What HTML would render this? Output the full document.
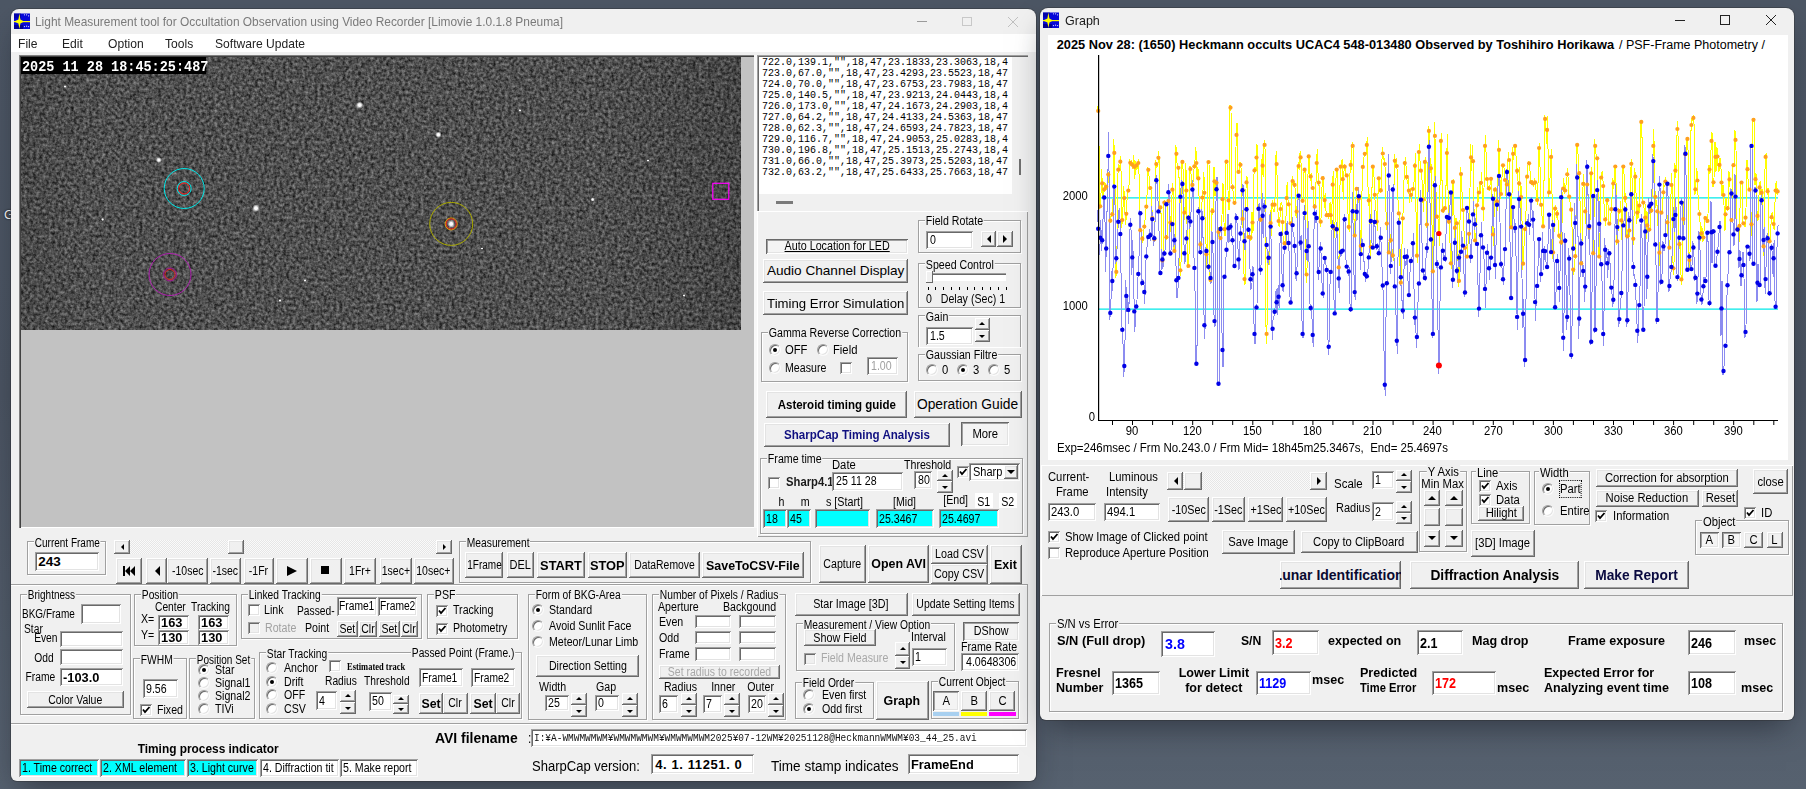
<!DOCTYPE html><html><head><meta charset="utf-8"><title>Limovie</title><style>
*{box-sizing:border-box}
html,body{margin:0;padding:0}
body{width:1806px;height:789px;overflow:hidden;position:relative;font-family:"Liberation Sans",sans-serif;font-size:12px;color:#000;
background:linear-gradient(180deg,#4d5765 0%,#4b5462 50%,#56616f 100%)}
.a{position:absolute}
.win{position:absolute;background:#f0f0f0;border-radius:8px;overflow:hidden;box-shadow:0 0 0 1px rgba(40,40,40,.35),0 14px 30px -8px rgba(20,24,32,.55)}
.btn{position:absolute;background:#f0f0f0;white-space:pre;box-shadow:inset -1px -1px #696969,inset 1px 1px #fff,inset -2px -2px #a0a0a0,inset 2px 2px #e3e3e3;display:flex;align-items:center;justify-content:center;white-space:nowrap;overflow:hidden;font-size:12.5px}
.prs{box-shadow:inset 1px 1px #696969,inset -1px -1px #fff,inset 2px 2px #a0a0a0,inset -2px -2px #e3e3e3;background:#f4f4f4}
.ed{position:absolute;background:#fff;box-shadow:inset 1px 1px #a0a0a0,inset -1px -1px #fff,inset 2px 2px #696969,inset -2px -2px #e3e3e3;white-space:nowrap;overflow:hidden;padding-left:4px;display:flex;align-items:center;font-size:12.5px}
.grp{position:absolute;border:1px solid #a0a0a0;box-shadow:inset 1px 1px #fff,1px 1px #fff}
.gl{position:absolute;top:-6.5px;left:6px;background:#f0f0f0;padding:0 1px;line-height:14px;white-space:nowrap;font-size:12.5px}
.t{position:absolute;white-space:pre;line-height:14px;font-size:12.5px}
.cb{position:absolute;width:12px;height:12px;background:#fff;box-shadow:inset 1px 1px #a0a0a0,inset -1px -1px #fff,inset 2px 2px #696969,inset -2px -2px #e3e3e3}
.rb{position:absolute;width:12px;height:12px;border-radius:50%;background:#fff;border:1px solid;border-color:#a0a0a0 #fafafa #fafafa #a0a0a0;transform:rotate(0deg);box-shadow:inset 1px 1px #696969,inset -1px -1px #e3e3e3}
.rb.on::after{content:"";position:absolute;left:3px;top:3px;width:4px;height:4px;border-radius:50%;background:#000}
.sp{position:absolute}
.sp i{position:absolute;left:0;width:100%;background:#f0f0f0;box-shadow:inset -1px -1px #696969,inset 1px 1px #fff,inset -2px -2px #a0a0a0}
.up::after,.dn::after{content:"";position:absolute;left:50%;top:50%;margin-left:-3px;border-left:3px solid transparent;border-right:3px solid transparent}
.up::after{margin-top:-2px;border-bottom:3px solid #000}
.dn::after{margin-top:-1px;border-top:3px solid #000}
.b{font-weight:bold}
.cy{background:#00ffff}
</style></head><body><div class="t" style="left:4px;top:207px;line-height:16px;font-size:13px;color:#fff;text-shadow:0 0 2px #000">G</div>
<div class="win" style="left:11px;top:8.5px;width:1025px;height:772.5px;border-radius:8px 8px 6px 6px"></div>
<div class="a" style="left:11px;top:34px;width:1025px;height:18px;background:#fff"></div>
<svg width="16" height="16" viewBox="0 0 16 16" style="position:absolute;left:14px;top:13px">
<rect x="0" y="0.5" width="16" height="15.5" fill="#0808d8"/>
<rect x="0" y="0.5" width="7" height="5" fill="#000090" opacity="0.6"/>
<rect x="0" y="12" width="9" height="4" fill="#000070" opacity="0.7"/>
<rect x="0" y="8" width="16" height="1.2" fill="#ffff00"/>
<path d="M5.4 0.5 L6.4 6.6 L10 8.6 L6.4 10.6 L5.4 16 L4.4 10.6 L0 8.6 L4.4 6.6 Z" fill="#ffff00"/>
<g fill="#e0e0ff"><circle cx="10.5" cy="1.8" r="0.6"/><circle cx="12.6" cy="1.8" r="0.6"/><circle cx="14.6" cy="2.8" r="0.6"/>
<circle cx="10.5" cy="13.6" r="0.6"/><circle cx="12.6" cy="13.2" r="0.6"/><circle cx="14.6" cy="13.6" r="0.6"/></g>
</svg>
<div class="t" style="left:35px;top:13.5px;line-height:16px;"><span style="display:inline-block;font-size:13.2px;transform:scaleX(0.903);transform-origin:0 50%;color:#7a7a7a;">Light Measurement tool for Occultation Observation using Video Recorder [Limovie 1.0.1.8 Pneuma]</span></div>
<div class="a" style="left:917px;top:21px;width:10px;height:1px;background:#9a9a9a"></div>
<div class="a" style="left:962px;top:16.5px;width:10px;height:9.5px;border:1px solid #c8c8c8"></div>
<svg class="a" style="left:1007px;top:16px" width="12" height="12"><path d="M1 1L11 11M11 1L1 11" stroke="#c0c0c0" stroke-width="1"/></svg>
<div class="t" style="left:18px;top:35.5px;line-height:16px;"><span style="display:inline-block;font-size:13px;transform:scaleX(0.93);transform-origin:0 50%;color:#222;">File</span></div>
<div class="t" style="left:62px;top:35.5px;line-height:16px;"><span style="display:inline-block;font-size:13px;transform:scaleX(0.93);transform-origin:0 50%;color:#222;">Edit</span></div>
<div class="t" style="left:108px;top:35.5px;line-height:16px;"><span style="display:inline-block;font-size:13px;transform:scaleX(0.93);transform-origin:0 50%;color:#222;">Option</span></div>
<div class="t" style="left:165px;top:35.5px;line-height:16px;"><span style="display:inline-block;font-size:13px;transform:scaleX(0.93);transform-origin:0 50%;color:#222;">Tools</span></div>
<div class="t" style="left:215px;top:35.5px;line-height:16px;"><span style="display:inline-block;font-size:13px;transform:scaleX(0.93);transform-origin:0 50%;color:#222;">Software Update</span></div>
<div class="a" style="left:19px;top:55px;width:736px;height:473px;background:#c2c2c2;box-shadow:inset 1px 1px #808080,inset 2px 2px #404040,inset -1px -1px #fff"></div>
<div class="a" style="left:754px;top:55px;width:3px;height:473px;background:#f8f8f8"></div>
<svg class="a" style="left:21px;top:56.5px" width="720" height="273" viewBox="0 0 720 273">
<defs>
<filter id="nz" x="0" y="0" width="100%" height="100%" filterUnits="userSpaceOnUse" color-interpolation-filters="sRGB">
<feTurbulence type="fractalNoise" baseFrequency="0.32" numOctaves="3" seed="3" result="n"/>
<feColorMatrix in="n" type="matrix" values="0.6 0 0 0 0.01  0.6 0 0 0 0.01  0.6 0 0 0 0.01  0 0 0 0 1"/>
</filter>
<linearGradient id="vg" x1="0" x2="1" y1="0" y2="0"><stop offset="0" stop-color="#000" stop-opacity="0.08"/><stop offset="0.1" stop-color="#000" stop-opacity="0"/><stop offset="0.8" stop-color="#000" stop-opacity="0"/><stop offset="1" stop-color="#000" stop-opacity="0.12"/></linearGradient>
<radialGradient id="st"><stop offset="0" stop-color="#fff"/><stop offset="0.4" stop-color="#fff" stop-opacity="0.95"/><stop offset="1" stop-color="#fff" stop-opacity="0"/></radialGradient>
</defs>
<rect width="720" height="273" filter="url(#nz)"/>
<rect width="720" height="273" fill="url(#vg)"/>

<circle cx="338.6" cy="48.1" r="3.6" fill="url(#st)"/>
<circle cx="417.4" cy="77.7" r="3.2" fill="url(#st)"/>
<circle cx="235" cy="151.2" r="3.8" fill="url(#st)"/>
<circle cx="137.9" cy="103.0" r="3" fill="url(#st)"/>
<circle cx="430.2" cy="166.9" r="3.8" fill="url(#st)"/>
<circle cx="571.6" cy="142.5" r="2" fill="url(#st)"/>
<circle cx="81.6" cy="162.5" r="1.6" fill="url(#st)"/>
<circle cx="284" cy="223.5" r="1.4" fill="url(#st)"/>
<circle cx="663" cy="238.5" r="1.4" fill="url(#st)"/>
<circle cx="499" cy="53.5" r="1.4" fill="url(#st)"/>
<circle cx="44" cy="29.5" r="1.4" fill="url(#st)"/>
<circle cx="259" cy="243.5" r="1.5" fill="url(#st)"/>
<circle cx="461" cy="191.5" r="1.3" fill="url(#st)"/>
<circle cx="627" cy="103.5" r="1.3" fill="url(#st)"/>
<circle cx="163.2" cy="131.5" r="20" fill="none" stroke="#00e8e8" stroke-width="1"/>
<circle cx="163.2" cy="131.5" r="7" fill="none" stroke="#00e8e8" stroke-width="1"/>
<circle cx="163.2" cy="131.5" r="5.5" fill="none" stroke="#ff2020" stroke-width="1"/>
<circle cx="149" cy="217.5" r="21" fill="none" stroke="#b020b0" stroke-width="1"/>
<circle cx="149" cy="217.5" r="6.5" fill="none" stroke="#a01090" stroke-width="1"/>
<circle cx="149" cy="217.5" r="5" fill="none" stroke="#e02020" stroke-width="1"/>
<circle cx="430.2" cy="166.9" r="21.5" fill="none" stroke="#a8a800" stroke-width="1"/>
<circle cx="430.2" cy="166.9" r="6" fill="none" stroke="#e0a000" stroke-width="1"/>
<circle cx="430.2" cy="166.9" r="5" fill="none" stroke="#e02020" stroke-width="1"/>
<rect x="691.8" y="126.30000000000001" width="16" height="16" fill="none" stroke="#ff00ff" stroke-width="1.2"/>
</svg>
<div class="a" style="left:21px;top:56.5px;width:185px;height:17.0px;background:#000"></div>
<div class="t" style="left:22px;top:58.5px;line-height:17px;font-family:'Liberation Mono',monospace;font-weight:bold;font-size:15px;color:#fff"><span style="display:inline-block;transform:scale(0.9,1.0);transform-origin:0 50%">2025 11 28 18:45:25:487</span></div>
<div class="a" style="left:757px;top:55px;width:271px;height:156px;background:#f0f0f0;box-shadow:inset 1px 1px #a0a0a0,inset 2px 2px #696969"></div>
<div class="a" style="left:759px;top:57px;width:253px;height:136.5px;background:#fff"></div>
<div class="a" style="left:1019px;top:159px;width:2px;height:16px;background:#707070"></div>
<div class="a" style="left:776px;top:201px;width:17px;height:2.5px;background:#7a7a7a"></div>
<div class="t" style="left:762px;top:57.2px;line-height:12px;font-family:'Liberation Mono',monospace;font-size:10px;letter-spacing:0px">722.0,139.1,&quot;&quot;,18,47,23.1833,23.3063,18,4</div>
<div class="t" style="left:762px;top:68.2px;line-height:12px;font-family:'Liberation Mono',monospace;font-size:10px;letter-spacing:0px">723.0,67.0,&quot;&quot;,18,47,23.4293,23.5523,18,47</div>
<div class="t" style="left:762px;top:79.2px;line-height:12px;font-family:'Liberation Mono',monospace;font-size:10px;letter-spacing:0px">724.0,70.0,&quot;&quot;,18,47,23.6753,23.7983,18,47</div>
<div class="t" style="left:762px;top:90.2px;line-height:12px;font-family:'Liberation Mono',monospace;font-size:10px;letter-spacing:0px">725.0,140.5,&quot;&quot;,18,47,23.9213,24.0443,18,4</div>
<div class="t" style="left:762px;top:101.2px;line-height:12px;font-family:'Liberation Mono',monospace;font-size:10px;letter-spacing:0px">726.0,173.0,&quot;&quot;,18,47,24.1673,24.2903,18,4</div>
<div class="t" style="left:762px;top:112.2px;line-height:12px;font-family:'Liberation Mono',monospace;font-size:10px;letter-spacing:0px">727.0,64.2,&quot;&quot;,18,47,24.4133,24.5363,18,47</div>
<div class="t" style="left:762px;top:123.2px;line-height:12px;font-family:'Liberation Mono',monospace;font-size:10px;letter-spacing:0px">728.0,62.3,&quot;&quot;,18,47,24.6593,24.7823,18,47</div>
<div class="t" style="left:762px;top:134.2px;line-height:12px;font-family:'Liberation Mono',monospace;font-size:10px;letter-spacing:0px">729.0,116.7,&quot;&quot;,18,47,24.9053,25.0283,18,4</div>
<div class="t" style="left:762px;top:145.2px;line-height:12px;font-family:'Liberation Mono',monospace;font-size:10px;letter-spacing:0px">730.0,196.8,&quot;&quot;,18,47,25.1513,25.2743,18,4</div>
<div class="t" style="left:762px;top:156.2px;line-height:12px;font-family:'Liberation Mono',monospace;font-size:10px;letter-spacing:0px">731.0,66.0,&quot;&quot;,18,47,25.3973,25.5203,18,47</div>
<div class="t" style="left:762px;top:167.2px;line-height:12px;font-family:'Liberation Mono',monospace;font-size:10px;letter-spacing:0px">732.0,63.2,&quot;&quot;,18,47,25.6433,25.7663,18,47</div>
<div class="a" style="left:757px;top:211px;width:271px;height:326px;box-shadow:inset 1px 1px #fff,inset -1px -1px #a0a0a0"></div>
<div class="btn prs" style="left:765.5px;top:238.6px;width:142.5px;height:15.4px;text-decoration:underline"><span style="display:inline-block;font-size:12.5px;transform:scaleX(0.86);transform-origin:50% 50%;">Auto Location for LED</span></div>
<div class="btn" style="left:763.3px;top:259px;width:144.7px;height:23.5px;"><span style="display:inline-block;font-size:13.6px;transform:scaleX(1.0);transform-origin:50% 50%;">Audio Channel Display</span></div>
<div class="btn" style="left:763.3px;top:291px;width:144.7px;height:24px;"><span style="display:inline-block;font-size:13.6px;transform:scaleX(0.97);transform-origin:50% 50%;">Timing Error Simulation</span></div>
<div class="grp" style="left:917.5px;top:219.6px;width:103.3px;height:33.7px;"><div class="gl" style="left:6px;font-size:12.5px;transform:scaleX(0.85);transform-origin:0 50%">Field Rotate</div></div>
<div class="ed" style="left:925.5px;top:231px;width:47.5px;height:18.2px;padding-left:4px;"><span style="display:inline-block;font-size:12.5px;transform:scaleX(0.85);transform-origin:0 50%;">0</span></div>
<div class="btn" style="left:981.4px;top:230.5px;width:15.1px;height:16.0px;"></div>
<div class="a" style="width:0;height:0;border-top:4px solid transparent;border-bottom:4px solid transparent;border-right:4px solid #000;left:987.0px;top:234.5px"></div>
<div class="btn" style="left:996.5px;top:230.5px;width:16.8px;height:16.0px;"></div>
<div class="a" style="width:0;height:0;border-top:4px solid transparent;border-bottom:4px solid transparent;border-left:4px solid #000;left:1003.0px;top:234.5px"></div>
<div class="grp" style="left:917.5px;top:263px;width:103.3px;height:45px;"><div class="gl" style="left:6px;font-size:12.5px;transform:scaleX(0.85);transform-origin:0 50%">Speed Control</div></div>
<div class="a" style="left:926.7px;top:273.4px;width:79.8px;height:7.3px;background:#fff;box-shadow:inset 1px 1px #a0a0a0,inset 2px 2px #696969"></div>
<div class="a" style="left:926px;top:271px;width:7px;height:12px;background:#f0f0f0;box-shadow:inset -1px -1px #696969,inset 1px 1px #fff"></div>
<div class="a" style="left:927.5px;top:287px;width:1.0px;height:3px;background:#000"></div>
<div class="a" style="left:935.3px;top:287px;width:1.0px;height:3px;background:#000"></div>
<div class="a" style="left:943.1px;top:287px;width:1.0px;height:3px;background:#000"></div>
<div class="a" style="left:950.9px;top:287px;width:1.0px;height:3px;background:#000"></div>
<div class="a" style="left:958.7px;top:287px;width:1.0px;height:3px;background:#000"></div>
<div class="a" style="left:966.5px;top:287px;width:1.0px;height:3px;background:#000"></div>
<div class="a" style="left:974.3px;top:287px;width:1.0px;height:3px;background:#000"></div>
<div class="a" style="left:982.1px;top:287px;width:1.0px;height:3px;background:#000"></div>
<div class="a" style="left:989.9px;top:287px;width:1.0px;height:3px;background:#000"></div>
<div class="a" style="left:997.7px;top:287px;width:1.0px;height:3px;background:#000"></div>
<div class="a" style="left:1005.5px;top:287px;width:1.0px;height:3px;background:#000"></div>
<div class="t" style="left:926px;top:290.5px;line-height:16px;"><span style="display:inline-block;font-size:12.5px;transform:scaleX(0.85);transform-origin:0 50%;">0   Delay (Sec) 1</span></div>
<div class="grp" style="left:917.5px;top:315.4px;width:103.3px;height:31.6px;border-bottom:none"><div class="gl" style="left:6px;font-size:12.5px;transform:scaleX(0.85);transform-origin:0 50%">Gain</div></div>
<div class="ed" style="left:925.5px;top:326.8px;width:47.5px;height:18.2px;padding-left:4px;"><span style="display:inline-block;font-size:12.5px;transform:scaleX(0.85);transform-origin:0 50%;">1.5</span></div>
<div class="sp" style="left:974.6px;top:318.3px;width:15.2px;height:24.0px"><i class="up" style="top:0;height:12.0px"></i><i class="dn" style="top:12.0px;height:12.0px"></i></div>
<div class="grp" style="left:917.5px;top:353.7px;width:103.3px;height:27.3px;"><div class="gl" style="left:6px;font-size:12.5px;transform:scaleX(0.85);transform-origin:0 50%">Gaussian Filtre</div></div>
<div class="rb" style="left:925.9px;top:363.6px"></div>
<div class="t" style="left:942px;top:361.6px;line-height:16px;"><span style="display:inline-block;font-size:12.5px;transform:scaleX(0.9);transform-origin:0 50%;">0</span></div>
<div class="rb on" style="left:957.2px;top:363.6px"></div>
<div class="t" style="left:973px;top:361.6px;line-height:16px;"><span style="display:inline-block;font-size:12.5px;transform:scaleX(0.9);transform-origin:0 50%;">3</span></div>
<div class="rb" style="left:987.9px;top:363.6px"></div>
<div class="t" style="left:1004px;top:361.6px;line-height:16px;"><span style="display:inline-block;font-size:12.5px;transform:scaleX(0.9);transform-origin:0 50%;">5</span></div>
<div class="grp" style="left:760.7px;top:331.9px;width:147.3px;height:50.6px;"><div class="gl" style="left:6px;font-size:12.5px;transform:scaleX(0.85);transform-origin:0 50%">Gamma Reverse Correction</div></div>
<div class="rb on" style="left:768.5px;top:343.6px"></div>
<div class="t" style="left:785px;top:341.6px;line-height:16px;"><span style="display:inline-block;font-size:12.5px;transform:scaleX(0.9);transform-origin:0 50%;">OFF</span></div>
<div class="rb" style="left:816.5px;top:343.6px"></div>
<div class="t" style="left:833px;top:341.6px;line-height:16px;"><span style="display:inline-block;font-size:12.5px;transform:scaleX(0.9);transform-origin:0 50%;">Field</span></div>
<div class="rb" style="left:768.5px;top:361.9px"></div>
<div class="t" style="left:785px;top:359.9px;line-height:16px;"><span style="display:inline-block;font-size:12.5px;transform:scaleX(0.85);transform-origin:0 50%;">Measure</span></div>
<div class="cb" style="left:840.2px;top:362px;width:12px;height:12px;"></div>
<div class="ed" style="left:866.5px;top:356.7px;width:31.4px;height:18.7px;padding-left:4px;"><span style="display:inline-block;font-size:12.5px;transform:scaleX(0.85);transform-origin:0 50%;color:#a0a0a0;">1.00</span></div>
<div class="btn" style="left:765.7px;top:390.5px;width:141.7px;height:27.0px;"><span style="display:inline-block;font-size:13px;transform:scaleX(0.885);transform-origin:50% 50%;font-weight:bold;">Asteroid timing guide</span></div>
<div class="btn" style="left:913.5px;top:390.5px;width:108.1px;height:27.0px;"><span style="display:inline-block;font-size:13.8px;transform:scaleX(1.0);transform-origin:50% 50%;">Operation Guide</span></div>
<div class="btn" style="left:763.5px;top:422.5px;width:186.5px;height:24.8px;"><span style="display:inline-block;font-size:13px;transform:scaleX(0.89);transform-origin:50% 50%;font-weight:bold;color:#101080;">SharpCap Timing Analysis</span></div>
<div class="btn prs" style="left:961.1px;top:422.2px;width:47.7px;height:23.7px;"><span style="display:inline-block;font-size:12.5px;transform:scaleX(0.9);transform-origin:50% 50%;">More</span></div>
<div class="grp" style="left:759.5px;top:457.7px;width:263.5px;height:76.7px;"><div class="gl" style="left:6px;font-size:12.5px;transform:scaleX(0.85);transform-origin:0 50%">Frame time</div></div>
<div class="cb" style="left:767.5px;top:476.5px;width:12px;height:12px;"></div>
<div class="t" style="left:786px;top:473.8px;line-height:16px;"><span style="display:inline-block;font-size:12.5px;transform:scaleX(0.9);transform-origin:0 50%;font-weight:bold;color:#1a1a1a;">Sharp4.1</span></div>
<div class="t" style="left:831.7px;top:456.7px;line-height:16px;"><span style="display:inline-block;font-size:12.5px;transform:scaleX(0.9);transform-origin:0 50%;">Date</span></div>
<div class="ed" style="left:831.7px;top:471.7px;width:71.0px;height:19.0px;padding-left:4px;"><span style="display:inline-block;font-size:12.5px;transform:scaleX(0.85);transform-origin:0 50%;">25 11 28</span></div>
<div class="t" style="left:904px;top:456.8px;line-height:16px;"><span style="display:inline-block;font-size:12.5px;transform:scaleX(0.85);transform-origin:0 50%;">Threshold</span></div>
<div class="ed" style="left:913.5px;top:471.3px;width:18.2px;height:18.2px;padding-left:4px;"><span style="display:inline-block;font-size:12.5px;transform:scaleX(0.85);transform-origin:0 50%;">80</span></div>
<div class="sp" style="left:937.2px;top:470.3px;width:15.4px;height:22.3px"><i class="up" style="top:0;height:11.2px"></i><i class="dn" style="top:11.2px;height:11.2px"></i></div>
<div class="cb" style="left:956.7px;top:466px;width:12px;height:12px;"><svg width="12" height="12" style="position:absolute;left:0;top:0"><path d="M3 5.5 L5 8 L9.5 3" stroke="#000" stroke-width="1.8" fill="none"/></svg></div>
<div class="ed" style="left:969.2px;top:462.8px;width:51px;height:18.5px"><span style="display:inline-block;font-size:12.5px;transform:scaleX(0.88);transform-origin:0 50%;">Sharp</span></div>
<div class="btn" style="left:1003.7px;top:464.8px;width:14.8px;height:14.2px;"></div>
<div class="a" style="width:0;height:0;border-left:4px solid transparent;border-right:4px solid transparent;border-top:4px solid #000;left:1007px;top:470.0px"></div>
<div class="t" style="left:781px;top:493.5px;line-height:16px;width:0;display:flex;justify-content:center;"><span style="display:inline-block;font-size:12.5px;transform:scaleX(0.85);transform-origin:50% 50%;">h</span></div>
<div class="t" style="left:805px;top:493.5px;line-height:16px;width:0;display:flex;justify-content:center;"><span style="display:inline-block;font-size:12.5px;transform:scaleX(0.85);transform-origin:50% 50%;">m</span></div>
<div class="t" style="left:825.8px;top:493.5px;line-height:16px;"><span style="display:inline-block;font-size:12.5px;transform:scaleX(0.86);transform-origin:0 50%;">s [Start]</span></div>
<div class="t" style="left:905px;top:493.5px;line-height:16px;width:0;display:flex;justify-content:center;"><span style="display:inline-block;font-size:12.5px;transform:scaleX(0.85);transform-origin:50% 50%;">[Mid]</span></div>
<div class="t" style="left:956px;top:491.7px;line-height:16px;width:0;display:flex;justify-content:center;"><span style="display:inline-block;font-size:12.5px;transform:scaleX(0.85);transform-origin:50% 50%;">[End]</span></div>
<div class="a" style="left:975px;top:492.6px;width:17.6px;height:15.2px;background:#fff"></div>
<div class="t" style="left:984px;top:493.5px;line-height:16px;width:0;display:flex;justify-content:center;"><span style="display:inline-block;font-size:12.5px;transform:scaleX(0.85);transform-origin:50% 50%;">S1</span></div>
<div class="a" style="left:998.7px;top:492.6px;width:18.2px;height:15.2px;background:#fff"></div>
<div class="t" style="left:1008px;top:493.5px;line-height:16px;width:0;display:flex;justify-content:center;"><span style="display:inline-block;font-size:12.5px;transform:scaleX(0.85);transform-origin:50% 50%;">S2</span></div>
<div class="ed" style="left:763.3px;top:509.1px;width:23.5px;height:19.0px;padding-left:3px;background:#00ffff;"><span style="display:inline-block;font-size:12.5px;transform:scaleX(0.85);transform-origin:0 50%;">18</span></div>
<div class="ed" style="left:787.4px;top:509.1px;width:23.2px;height:19.0px;padding-left:3px;background:#00ffff;"><span style="display:inline-block;font-size:12.5px;transform:scaleX(0.85);transform-origin:0 50%;">45</span></div>
<div class="ed" style="left:815.3px;top:509.1px;width:55.1px;height:19.0px;padding-left:4px;background:#00ffff;"></div>
<div class="ed" style="left:875.5px;top:509.1px;width:58.9px;height:19.0px;padding-left:3px;background:#00ffff;"><span style="display:inline-block;font-size:12.5px;transform:scaleX(0.85);transform-origin:0 50%;">25.3467</span></div>
<div class="ed" style="left:939.2px;top:509.1px;width:59.5px;height:19.0px;padding-left:3px;background:#00ffff;"><span style="display:inline-block;font-size:12.5px;transform:scaleX(0.85);transform-origin:0 50%;">25.4697</span></div>
<div class="grp" style="left:27.4px;top:541.4px;width:79.1px;height:33.6px;"><div class="gl" style="left:6px;font-size:12.5px;transform:scaleX(0.8);transform-origin:0 50%">Current Frame</div></div>
<div class="ed" style="left:35.3px;top:552.4px;width:63.6px;height:19.0px;padding-left:3px;"><span style="display:inline-block;font-size:13.5px;transform:scaleX(1.0);transform-origin:0 50%;font-weight:bold;">243</span></div>
<div class="a" style="left:114px;top:539.5px;width:338px;height:14.1px;background:#f2f2f2;background-image:repeating-conic-gradient(#e6e6e6 0 25%,#fafafa 0 50%);background-size:2px 2px"></div>
<div class="btn" style="left:114px;top:539.5px;width:16px;height:14.1px;"></div>
<div class="a" style="width:0;height:0;border-top:3px solid transparent;border-bottom:3px solid transparent;border-right:3px solid #000;left:120.5px;top:543.5px"></div>
<div class="btn" style="left:228px;top:539.5px;width:16px;height:14.1px;"></div>
<div class="btn" style="left:436px;top:539.5px;width:16px;height:14.1px;"></div>
<div class="a" style="width:0;height:0;border-top:3px solid transparent;border-bottom:3px solid transparent;border-left:3px solid #000;left:442.5px;top:543.5px"></div>
<div class="btn" style="left:115.9px;top:558.2px;width:25.8px;height:25.4px;"><svg width="14" height="12"><rect x="1" y="1" width="2" height="10"/><path d="M8 1L3 6L8 11Z M13 1L8 6L13 11Z"/></svg></div>
<div class="btn" style="left:146px;top:558.2px;width:21.3px;height:25.4px;"></div>
<div class="a" style="width:0;height:0;border-top:5px solid transparent;border-bottom:5px solid transparent;border-right:5px solid #000;left:154.5px;top:566px"></div>
<div class="btn" style="left:167.3px;top:558.2px;width:40.3px;height:25.4px;"><span style="display:inline-block;font-size:12.5px;transform:scaleX(0.84);transform-origin:50% 50%;">-10sec</span></div>
<div class="btn" style="left:209.9px;top:558.2px;width:31.6px;height:25.4px;"><span style="display:inline-block;font-size:12.5px;transform:scaleX(0.84);transform-origin:50% 50%;">-1sec</span></div>
<div class="btn" style="left:244px;top:558.2px;width:29.8px;height:25.4px;"><span style="display:inline-block;font-size:12.5px;transform:scaleX(0.84);transform-origin:50% 50%;">-1Fr</span></div>
<div class="btn" style="left:276px;top:558.2px;width:31.6px;height:25.4px;"><svg width="12" height="12"><path d="M1 1L11 6L1 11Z"/></svg></div>
<div class="btn" style="left:310px;top:558.2px;width:31.8px;height:25.4px;"><svg width="9" height="9"><rect x="0" y="0" width="8" height="8"/></svg></div>
<div class="btn" style="left:344px;top:558.2px;width:31.7px;height:25.4px;"><span style="display:inline-block;font-size:12.5px;transform:scaleX(0.84);transform-origin:50% 50%;">1Fr+</span></div>
<div class="btn" style="left:379.8px;top:558.2px;width:31.9px;height:25.4px;"><span style="display:inline-block;font-size:12.5px;transform:scaleX(0.84);transform-origin:50% 50%;">1sec+</span></div>
<div class="btn" style="left:414px;top:558.2px;width:39.6px;height:25.4px;"><span style="display:inline-block;font-size:12.5px;transform:scaleX(0.84);transform-origin:50% 50%;">10sec+</span></div>
<div class="grp" style="left:459px;top:541px;width:352px;height:42.3px;"><div class="gl" style="left:6px;font-size:12.5px;transform:scaleX(0.82);transform-origin:0 50%">Measurement</div></div>
<div class="btn" style="left:465.3px;top:552.4px;width:37.6px;height:26.1px;"><span style="display:inline-block;font-size:12.5px;transform:scaleX(0.8);transform-origin:50% 50%;">1Frame</span></div>
<div class="btn" style="left:507px;top:552.4px;width:26.8px;height:26.1px;"><span style="display:inline-block;font-size:12.5px;transform:scaleX(0.88);transform-origin:50% 50%;">DEL</span></div>
<div class="btn" style="left:537.3px;top:552.4px;width:47.4px;height:26.1px;"><span style="display:inline-block;font-size:13.5px;transform:scaleX(0.95);transform-origin:50% 50%;font-weight:bold;">START</span></div>
<div class="btn" style="left:587.5px;top:552.4px;width:39.3px;height:26.1px;"><span style="display:inline-block;font-size:13.5px;transform:scaleX(0.95);transform-origin:50% 50%;font-weight:bold;">STOP</span></div>
<div class="btn" style="left:629px;top:552.4px;width:71.3px;height:26.1px;"><span style="display:inline-block;font-size:12.5px;transform:scaleX(0.83);transform-origin:50% 50%;">DataRemove</span></div>
<div class="btn" style="left:701.9px;top:552.4px;width:101.9px;height:26.1px;"><span style="display:inline-block;font-size:13.5px;transform:scaleX(0.92);transform-origin:50% 50%;font-weight:bold;">SaveToCSV-File</span></div>
<div class="btn" style="left:819.3px;top:544.5px;width:46.4px;height:38.8px;"><span style="display:inline-block;font-size:12.5px;transform:scaleX(0.85);transform-origin:50% 50%;">Capture</span></div>
<div class="btn" style="left:867.6px;top:544.5px;width:61.8px;height:38.8px;"><span style="display:inline-block;font-size:13.5px;transform:scaleX(0.92);transform-origin:50% 50%;font-weight:bold;">Open AVI</span></div>
<div class="btn" style="left:931.4px;top:544.5px;width:56.3px;height:19.0px;"><span style="display:inline-block;font-size:12.5px;transform:scaleX(0.86);transform-origin:50% 50%;">Load CSV</span></div>
<div class="btn" style="left:931.4px;top:564.2px;width:56.3px;height:19.4px;"><span style="display:inline-block;font-size:12.5px;transform:scaleX(0.86);transform-origin:50% 50%;">Copy CSV</span></div>
<div class="btn" style="left:989.5px;top:544.5px;width:32.2px;height:39.1px;"><span style="display:inline-block;font-size:13.5px;transform:scaleX(0.92);transform-origin:50% 50%;font-weight:bold;">Exit</span></div>
<div class="a" style="left:11px;top:584px;width:1016.5px;height:1px;background:#a0a0a0"></div>
<div class="a" style="left:11px;top:585px;width:1016.5px;height:1px;background:#fff"></div>
<div class="a" style="left:1027px;top:585px;width:1px;height:138px;background:#a0a0a0"></div>
<div class="a" style="left:11px;top:722.5px;width:1017px;height:1.0px;background:#a0a0a0"></div>
<div class="a" style="left:11px;top:723.5px;width:1017px;height:1.0px;background:#fff"></div>
<div class="grp" style="left:19.5px;top:593.7px;width:111.0px;height:121.8px;"><div class="gl" style="left:6px;font-size:12.5px;transform:scaleX(0.8);transform-origin:0 50%">Brightness</div></div>
<div class="t" style="left:21.5px;top:605.5px;line-height:16px;"><span style="display:inline-block;font-size:12.5px;transform:scaleX(0.8);transform-origin:0 50%;">BKG/Frame</span></div>
<div class="ed" style="left:81.4px;top:604px;width:39.5px;height:19.9px;padding-left:4px;"></div>
<div class="t" style="left:24px;top:621.0px;line-height:16px;"><span style="display:inline-block;font-size:12.5px;transform:scaleX(0.82);transform-origin:0 50%;">Star</span></div>
<div class="t" style="right:1749px;top:630.0px;line-height:16px;"><span style="display:inline-block;font-size:12.5px;transform:scaleX(0.82);transform-origin:100% 50%;">Even</span></div>
<div class="ed" style="left:59.5px;top:630.5px;width:63.0px;height:16.5px;padding-left:4px;"></div>
<div class="t" style="right:1752.5px;top:649.5px;line-height:16px;"><span style="display:inline-block;font-size:12.5px;transform:scaleX(0.82);transform-origin:100% 50%;">Odd</span></div>
<div class="ed" style="left:59.5px;top:649.4px;width:63.2px;height:16.1px;padding-left:4px;"></div>
<div class="t" style="right:1750.5px;top:669.0px;line-height:16px;"><span style="display:inline-block;font-size:12.5px;transform:scaleX(0.82);transform-origin:100% 50%;">Frame</span></div>
<div class="ed" style="left:59.5px;top:668.3px;width:63.2px;height:18.0px;padding-left:3px;"><span style="display:inline-block;font-size:13.5px;transform:scaleX(0.95);transform-origin:0 50%;font-weight:bold;">-103.0</span></div>
<div class="btn" style="left:27.4px;top:691px;width:96.3px;height:17.4px;"><span style="display:inline-block;font-size:12.5px;transform:scaleX(0.84);transform-origin:50% 50%;">Color Value</span></div>
<div class="grp" style="left:133.5px;top:593.7px;width:103.0px;height:52.0px;"><div class="gl" style="left:6px;font-size:12.5px;transform:scaleX(0.82);transform-origin:0 50%">Position</div></div>
<div class="t" style="left:155.4px;top:599.1px;line-height:16px;"><span style="display:inline-block;font-size:12.5px;transform:scaleX(0.82);transform-origin:0 50%;">Center</span></div>
<div class="t" style="left:190.9px;top:599.1px;line-height:16px;"><span style="display:inline-block;font-size:12.5px;transform:scaleX(0.82);transform-origin:0 50%;">Tracking</span></div>
<div class="t" style="left:140.5px;top:611.3px;line-height:16px;"><span style="display:inline-block;font-size:12.5px;transform:scaleX(0.85);transform-origin:0 50%;">X=</span></div>
<div class="t" style="left:140.5px;top:627.3px;line-height:16px;"><span style="display:inline-block;font-size:12.5px;transform:scaleX(0.85);transform-origin:0 50%;">Y=</span></div>
<div class="ed" style="left:158.2px;top:614.5px;width:30.4px;height:15.3px;padding-left:3px;"><span style="display:inline-block;font-size:13.5px;transform:scaleX(0.95);transform-origin:0 50%;font-weight:bold;">163</span></div>
<div class="ed" style="left:158.2px;top:630.2px;width:30.4px;height:14.8px;padding-left:3px;"><span style="display:inline-block;font-size:13.5px;transform:scaleX(0.95);transform-origin:0 50%;font-weight:bold;">130</span></div>
<div class="ed" style="left:197.7px;top:614.5px;width:31.2px;height:15.3px;padding-left:3px;"><span style="display:inline-block;font-size:13.5px;transform:scaleX(0.95);transform-origin:0 50%;font-weight:bold;">163</span></div>
<div class="ed" style="left:197.7px;top:630.2px;width:31.2px;height:14.8px;padding-left:3px;"><span style="display:inline-block;font-size:13.5px;transform:scaleX(0.95);transform-origin:0 50%;font-weight:bold;">130</span></div>
<div class="grp" style="left:241.4px;top:593.7px;width:180.2px;height:45.3px;"><div class="gl" style="left:6px;font-size:12.5px;transform:scaleX(0.82);transform-origin:0 50%">Linked Tracking</div></div>
<div class="cb" style="left:247.5px;top:604px;width:12px;height:12px;"></div>
<div class="t" style="left:264px;top:602.0px;line-height:16px;"><span style="display:inline-block;font-size:12.5px;transform:scaleX(0.85);transform-origin:0 50%;">Link</span></div>
<div class="t" style="left:297px;top:603.0px;line-height:16px;"><span style="display:inline-block;font-size:12.5px;transform:scaleX(0.82);transform-origin:0 50%;">Passed-</span></div>
<div class="t" style="left:305px;top:619.5px;line-height:16px;"><span style="display:inline-block;font-size:12.5px;transform:scaleX(0.85);transform-origin:0 50%;">Point</span></div>
<div class="ed" style="left:337.2px;top:596.5px;width:40.3px;height:19.5px;padding-left:2px;"><span style="display:inline-block;font-size:12.5px;transform:scaleX(0.82);transform-origin:0 50%;">Frame1</span></div>
<div class="ed" style="left:377.5px;top:596.5px;width:39.3px;height:19.5px;padding-left:2px;"><span style="display:inline-block;font-size:12.5px;transform:scaleX(0.82);transform-origin:0 50%;">Frame2</span></div>
<div class="cb" style="left:247.5px;top:622.3px;width:12px;height:12px;background:#f0f0f0;"></div>
<div class="t" style="left:265px;top:620.0px;line-height:16px;"><span style="display:inline-block;font-size:12.5px;transform:scaleX(0.85);transform-origin:0 50%;color:#a0a0a0;">Rotate</span></div>
<div class="btn" style="left:337.2px;top:620.5px;width:21.2px;height:16.3px;"><span style="display:inline-block;font-size:12.5px;transform:scaleX(0.84);transform-origin:50% 50%;">Set</span></div>
<div class="btn" style="left:359.4px;top:620.5px;width:17.6px;height:16.3px;"><span style="display:inline-block;font-size:12.5px;transform:scaleX(0.84);transform-origin:50% 50%;">Clr</span></div>
<div class="btn" style="left:378.5px;top:620.5px;width:21.3px;height:16.3px;"><span style="display:inline-block;font-size:12.5px;transform:scaleX(0.84);transform-origin:50% 50%;">Set</span></div>
<div class="btn" style="left:400.6px;top:620.5px;width:17.4px;height:16.3px;"><span style="display:inline-block;font-size:12.5px;transform:scaleX(0.84);transform-origin:50% 50%;">Clr</span></div>
<div class="grp" style="left:427.4px;top:593.7px;width:90.4px;height:45.3px;"><div class="gl" style="left:6px;font-size:12.5px;transform:scaleX(0.85);transform-origin:0 50%">PSF</div></div>
<div class="cb" style="left:435.8px;top:604.5px;width:12px;height:12px;"><svg width="12" height="12" style="position:absolute;left:0;top:0"><path d="M3 5.5 L5 8 L9.5 3" stroke="#000" stroke-width="1.8" fill="none"/></svg></div>
<div class="t" style="left:453px;top:602.0px;line-height:16px;"><span style="display:inline-block;font-size:12.5px;transform:scaleX(0.85);transform-origin:0 50%;">Tracking</span></div>
<div class="cb" style="left:435.8px;top:622.5px;width:12px;height:12px;"><svg width="12" height="12" style="position:absolute;left:0;top:0"><path d="M3 5.5 L5 8 L9.5 3" stroke="#000" stroke-width="1.8" fill="none"/></svg></div>
<div class="t" style="left:453px;top:620.0px;line-height:16px;"><span style="display:inline-block;font-size:12.5px;transform:scaleX(0.85);transform-origin:0 50%;">Photometry</span></div>
<div class="grp" style="left:189.4px;top:658px;width:66.1px;height:61.3px;"><div class="gl" style="left:6px;font-size:12.5px;transform:scaleX(0.8);transform-origin:0 50%">Position Set</div></div>
<div class="rb on" style="left:197.6px;top:663.8px"></div>
<div class="t" style="left:215px;top:661.8px;line-height:16px;"><span style="display:inline-block;font-size:12.5px;transform:scaleX(0.85);transform-origin:0 50%;">Star</span></div>
<div class="rb" style="left:197.6px;top:676.9px"></div>
<div class="t" style="left:215px;top:674.9px;line-height:16px;"><span style="display:inline-block;font-size:12.5px;transform:scaleX(0.85);transform-origin:0 50%;">Signal1</span></div>
<div class="rb" style="left:197.6px;top:690.0px"></div>
<div class="t" style="left:215px;top:688.0px;line-height:16px;"><span style="display:inline-block;font-size:12.5px;transform:scaleX(0.85);transform-origin:0 50%;">Signal2</span></div>
<div class="rb" style="left:197.6px;top:703.1px"></div>
<div class="t" style="left:215px;top:701.1px;line-height:16px;"><span style="display:inline-block;font-size:12.5px;transform:scaleX(0.85);transform-origin:0 50%;">TIVi</span></div>
<div class="grp" style="left:133.1px;top:658px;width:53.8px;height:61.3px;"><div class="gl" style="left:6px;font-size:12.5px;transform:scaleX(0.82);transform-origin:0 50%">FWHM</div></div>
<div class="ed" style="left:142.6px;top:679.3px;width:35.8px;height:19.2px;padding-left:3px;"><span style="display:inline-block;font-size:12.5px;transform:scaleX(0.85);transform-origin:0 50%;">9.56</span></div>
<div class="cb" style="left:139.7px;top:704.2px;width:12px;height:12px;"><svg width="12" height="12" style="position:absolute;left:0;top:0"><path d="M3 5.5 L5 8 L9.5 3" stroke="#000" stroke-width="1.8" fill="none"/></svg></div>
<div class="t" style="left:157px;top:702.0px;line-height:16px;"><span style="display:inline-block;font-size:12.5px;transform:scaleX(0.85);transform-origin:0 50%;">Fixed</span></div>
<div class="grp" style="left:259.3px;top:652.3px;width:263.1px;height:67.0px;"><div class="gl" style="left:6px;font-size:12.5px;transform:scaleX(0.82);transform-origin:0 50%">Star Tracking</div></div>
<div class="rb" style="left:266px;top:662.3px"></div>
<div class="t" style="left:283.5px;top:660.3px;line-height:16px;"><span style="display:inline-block;font-size:12.5px;transform:scaleX(0.85);transform-origin:0 50%;">Anchor</span></div>
<div class="rb on" style="left:266px;top:675.7px"></div>
<div class="t" style="left:283.5px;top:673.7px;line-height:16px;"><span style="display:inline-block;font-size:12.5px;transform:scaleX(0.85);transform-origin:0 50%;">Drift</span></div>
<div class="rb" style="left:266px;top:689.1px"></div>
<div class="t" style="left:283.5px;top:687.1px;line-height:16px;"><span style="display:inline-block;font-size:12.5px;transform:scaleX(0.85);transform-origin:0 50%;">OFF</span></div>
<div class="rb" style="left:266px;top:702.5px"></div>
<div class="t" style="left:283.5px;top:700.5px;line-height:16px;"><span style="display:inline-block;font-size:12.5px;transform:scaleX(0.85);transform-origin:0 50%;">CSV</span></div>
<div class="cb" style="left:329.2px;top:660px;width:12px;height:12px;"></div>
<div class="t" style="left:347px;top:657.5px;line-height:16px;font-family:'Liberation Serif',serif;"><span style="display:inline-block;font-size:11px;transform:scaleX(0.77);transform-origin:0 50%;font-weight:bold;">Estimated track</span></div>
<div class="t" style="left:325px;top:673.0px;line-height:16px;"><span style="display:inline-block;font-size:12.5px;transform:scaleX(0.82);transform-origin:0 50%;">Radius</span></div>
<div class="t" style="left:364px;top:673.0px;line-height:16px;"><span style="display:inline-block;font-size:12.5px;transform:scaleX(0.82);transform-origin:0 50%;">Threshold</span></div>
<div class="ed" style="left:316.3px;top:691.4px;width:20.4px;height:18.5px;padding-left:3px;"><span style="display:inline-block;font-size:12.5px;transform:scaleX(0.85);transform-origin:0 50%;">4</span></div>
<div class="sp" style="left:339.6px;top:689.5px;width:16.0px;height:24.1px"><i class="up" style="top:0;height:12.1px"></i><i class="dn" style="top:12.1px;height:12.1px"></i></div>
<div class="ed" style="left:369.4px;top:692px;width:23.0px;height:18.8px;padding-left:3px;"><span style="display:inline-block;font-size:12.5px;transform:scaleX(0.85);transform-origin:0 50%;">50</span></div>
<div class="sp" style="left:393.4px;top:694.8px;width:16.0px;height:18.8px"><i class="up" style="top:0;height:9.4px"></i><i class="dn" style="top:9.4px;height:9.4px"></i></div>
<div class="gl" style="left:410.5px;top:645.8px;font-size:12.5px;transform:scaleX(0.82);transform-origin:0 50%">Passed Point (Frame.)</div>
<div class="ed" style="left:419.3px;top:668.3px;width:43.4px;height:18.9px;padding-left:3px;"><span style="display:inline-block;font-size:12.5px;transform:scaleX(0.82);transform-origin:0 50%;">Frame1</span></div>
<div class="ed" style="left:471.4px;top:668.3px;width:43.4px;height:18.9px;padding-left:3px;"><span style="display:inline-block;font-size:12.5px;transform:scaleX(0.82);transform-origin:0 50%;">Frame2</span></div>
<div class="btn" style="left:419.3px;top:692.9px;width:23.7px;height:20.7px;"><span style="display:inline-block;font-size:13px;transform:scaleX(0.95);transform-origin:50% 50%;font-weight:bold;">Set</span></div>
<div class="btn" style="left:443px;top:692.9px;width:24.6px;height:20.7px;"><span style="display:inline-block;font-size:12.5px;transform:scaleX(0.84);transform-origin:50% 50%;">Clr</span></div>
<div class="btn" style="left:469.5px;top:692.9px;width:26.8px;height:20.7px;"><span style="display:inline-block;font-size:13px;transform:scaleX(0.95);transform-origin:50% 50%;font-weight:bold;">Set</span></div>
<div class="btn" style="left:496.3px;top:692.9px;width:23.6px;height:20.7px;"><span style="display:inline-block;font-size:12.5px;transform:scaleX(0.84);transform-origin:50% 50%;">Clr</span></div>
<div class="grp" style="left:527.7px;top:593.7px;width:119.1px;height:126.5px;"><div class="gl" style="left:6px;font-size:12.5px;transform:scaleX(0.82);transform-origin:0 50%">Form of BKG-Area</div></div>
<div class="rb on" style="left:531.6px;top:604.2px"></div>
<div class="t" style="left:549px;top:602.2px;line-height:16px;"><span style="display:inline-block;font-size:12.5px;transform:scaleX(0.85);transform-origin:0 50%;">Standard</span></div>
<div class="rb" style="left:531.6px;top:620.1px"></div>
<div class="t" style="left:549px;top:618.1px;line-height:16px;"><span style="display:inline-block;font-size:12.5px;transform:scaleX(0.85);transform-origin:0 50%;">Avoid Sunlit Face</span></div>
<div class="rb" style="left:531.6px;top:636.0px"></div>
<div class="t" style="left:549px;top:634.0px;line-height:16px;"><span style="display:inline-block;font-size:12.5px;transform:scaleX(0.85);transform-origin:0 50%;">Meteor/Lunar Limb</span></div>
<div class="btn" style="left:535.6px;top:655.1px;width:103.8px;height:22.3px;"><span style="display:inline-block;font-size:12.5px;transform:scaleX(0.85);transform-origin:50% 50%;">Direction Setting</span></div>
<div class="t" style="left:539.4px;top:679.2px;line-height:16px;"><span style="display:inline-block;font-size:12.5px;transform:scaleX(0.85);transform-origin:0 50%;">Width</span></div>
<div class="t" style="left:595.5px;top:679.2px;line-height:16px;"><span style="display:inline-block;font-size:12.5px;transform:scaleX(0.85);transform-origin:0 50%;">Gap</span></div>
<div class="ed" style="left:545.4px;top:694.8px;width:23.2px;height:16.0px;padding-left:3px;"><span style="display:inline-block;font-size:12.5px;transform:scaleX(0.85);transform-origin:0 50%;">25</span></div>
<div class="sp" style="left:570.5px;top:692.5px;width:16.1px;height:24.0px"><i class="up" style="top:0;height:12.0px"></i><i class="dn" style="top:12.0px;height:12.0px"></i></div>
<div class="ed" style="left:595.4px;top:694.8px;width:23.3px;height:16.0px;padding-left:3px;"><span style="display:inline-block;font-size:12.5px;transform:scaleX(0.85);transform-origin:0 50%;">0</span></div>
<div class="sp" style="left:622.4px;top:692.5px;width:16.1px;height:24.0px"><i class="up" style="top:0;height:12.0px"></i><i class="dn" style="top:12.0px;height:12.0px"></i></div>
<div class="grp" style="left:651.6px;top:593.7px;width:134.6px;height:126.5px;"><div class="gl" style="left:6px;font-size:12.5px;transform:scaleX(0.82);transform-origin:0 50%">Number of Pixels / Radius</div></div>
<div class="t" style="left:658px;top:598.9px;line-height:16px;"><span style="display:inline-block;font-size:12.5px;transform:scaleX(0.85);transform-origin:0 50%;">Aperture</span></div>
<div class="t" style="left:723px;top:598.9px;line-height:16px;"><span style="display:inline-block;font-size:12.5px;transform:scaleX(0.85);transform-origin:0 50%;">Backgound</span></div>
<div class="t" style="left:659px;top:613.5px;line-height:16px;"><span style="display:inline-block;font-size:12.5px;transform:scaleX(0.85);transform-origin:0 50%;">Even</span></div>
<div class="ed" style="left:694.6px;top:614.7px;width:36.2px;height:13.7px;padding-left:4px;"></div>
<div class="ed" style="left:739.4px;top:614.7px;width:36.6px;height:13.7px;padding-left:4px;"></div>
<div class="t" style="left:659px;top:629.6px;line-height:16px;"><span style="display:inline-block;font-size:12.5px;transform:scaleX(0.85);transform-origin:0 50%;">Odd</span></div>
<div class="ed" style="left:694.6px;top:630.7px;width:36.2px;height:13.8px;padding-left:4px;"></div>
<div class="ed" style="left:739.4px;top:630.7px;width:36.6px;height:13.8px;padding-left:4px;"></div>
<div class="t" style="left:659px;top:646.0px;line-height:16px;"><span style="display:inline-block;font-size:12.5px;transform:scaleX(0.85);transform-origin:0 50%;">Frame</span></div>
<div class="ed" style="left:694.6px;top:647.2px;width:36.2px;height:13.6px;padding-left:4px;"></div>
<div class="ed" style="left:739.4px;top:647.2px;width:36.6px;height:13.6px;padding-left:4px;"></div>
<div class="btn" style="left:659.3px;top:664.5px;width:120.8px;height:14.2px;"><span style="display:inline-block;font-size:12.5px;transform:scaleX(0.84);transform-origin:50% 50%;color:#a8a8a8;">Set  radius to recorded</span></div>
<div class="t" style="left:680px;top:678.8px;line-height:16px;width:0;display:flex;justify-content:center;"><span style="display:inline-block;font-size:12.5px;transform:scaleX(0.85);transform-origin:50% 50%;">Radius</span></div>
<div class="t" style="left:722.9px;top:678.8px;line-height:16px;width:0;display:flex;justify-content:center;"><span style="display:inline-block;font-size:12.5px;transform:scaleX(0.85);transform-origin:50% 50%;">Inner</span></div>
<div class="t" style="left:760.3px;top:678.8px;line-height:16px;width:0;display:flex;justify-content:center;"><span style="display:inline-block;font-size:12.5px;transform:scaleX(0.85);transform-origin:50% 50%;">Outer</span></div>
<div class="ed" style="left:659.3px;top:694.8px;width:18.3px;height:17.9px;padding-left:3px;"><span style="display:inline-block;font-size:12.5px;transform:scaleX(0.85);transform-origin:0 50%;">6</span></div>
<div class="sp" style="left:681.4px;top:692.5px;width:16.0px;height:24.0px"><i class="up" style="top:0;height:12.0px"></i><i class="dn" style="top:12.0px;height:12.0px"></i></div>
<div class="ed" style="left:703.1px;top:694.8px;width:18.9px;height:17.9px;padding-left:3px;"><span style="display:inline-block;font-size:12.5px;transform:scaleX(0.85);transform-origin:0 50%;">7</span></div>
<div class="sp" style="left:724.2px;top:692.5px;width:16.3px;height:24.0px"><i class="up" style="top:0;height:12.0px"></i><i class="dn" style="top:12.0px;height:12.0px"></i></div>
<div class="ed" style="left:747.5px;top:694.8px;width:18.3px;height:17.9px;padding-left:3px;"><span style="display:inline-block;font-size:12.5px;transform:scaleX(0.85);transform-origin:0 50%;">20</span></div>
<div class="sp" style="left:768.2px;top:692.5px;width:15.7px;height:24.0px"><i class="up" style="top:0;height:12.0px"></i><i class="dn" style="top:12.0px;height:12.0px"></i></div>
<div class="btn" style="left:795px;top:592.7px;width:112.5px;height:23.6px;"><span style="display:inline-block;font-size:12.5px;transform:scaleX(0.86);transform-origin:50% 50%;">Star Image [3D]</span></div>
<div class="btn" style="left:911.6px;top:592.7px;width:108.0px;height:23.6px;"><span style="display:inline-block;font-size:12.5px;transform:scaleX(0.84);transform-origin:50% 50%;">Update Setting Items</span></div>
<div class="grp" style="left:795.7px;top:623.1px;width:159.1px;height:48.1px;"><div class="gl" style="left:6px;font-size:12.5px;transform:scaleX(0.82);transform-origin:0 50%">Measurement / View Option</div></div>
<div class="btn" style="left:804.4px;top:629.2px;width:71.5px;height:16.8px;"><span style="display:inline-block;font-size:12.5px;transform:scaleX(0.86);transform-origin:50% 50%;">Show Field</span></div>
<div class="cb" style="left:803.5px;top:652.5px;width:12px;height:12px;background:#f0f0f0;"></div>
<div class="t" style="left:821px;top:650.0px;line-height:16px;"><span style="display:inline-block;font-size:12.5px;transform:scaleX(0.85);transform-origin:0 50%;color:#a8a8a8;">Field Measure</span></div>
<div class="t" style="left:911px;top:629.0px;line-height:16px;"><span style="display:inline-block;font-size:12.5px;transform:scaleX(0.85);transform-origin:0 50%;">Interval</span></div>
<div class="sp" style="left:895.4px;top:641.9px;width:15.1px;height:27.4px"><i class="up" style="top:0;height:13.7px"></i><i class="dn" style="top:13.7px;height:13.7px"></i></div>
<div class="ed" style="left:912.3px;top:647.9px;width:34.6px;height:18.5px;padding-left:3px;"><span style="display:inline-block;font-size:12.5px;transform:scaleX(0.85);transform-origin:0 50%;">1</span></div>
<div class="btn prs" style="left:963.3px;top:622.3px;width:55.4px;height:18.3px;"><span style="display:inline-block;font-size:12.5px;transform:scaleX(0.86);transform-origin:50% 50%;">DShow</span></div>
<div class="t" style="left:961.4px;top:639.0px;line-height:16px;"><span style="display:inline-block;font-size:12.5px;transform:scaleX(0.85);transform-origin:0 50%;">Frame Rate</span></div>
<div class="ed" style="left:961.4px;top:652.8px;width:57.3px;height:18.4px;padding-left:5px;"><span style="display:inline-block;font-size:12.5px;transform:scaleX(0.85);transform-origin:0 50%;">4.0648306</span></div>
<div class="grp" style="left:795.2px;top:681.9px;width:78.4px;height:37.4px;"><div class="gl" style="left:6px;font-size:12.5px;transform:scaleX(0.82);transform-origin:0 50%">Field Order</div></div>
<div class="rb" style="left:803.4px;top:689.1px"></div>
<div class="t" style="left:821.7px;top:687.1px;line-height:16px;"><span style="display:inline-block;font-size:12.5px;transform:scaleX(0.85);transform-origin:0 50%;">Even first</span></div>
<div class="rb on" style="left:803.4px;top:702.9px"></div>
<div class="t" style="left:821.7px;top:700.9px;line-height:16px;"><span style="display:inline-block;font-size:12.5px;transform:scaleX(0.85);transform-origin:0 50%;">Odd first</span></div>
<div class="btn" style="left:875.5px;top:680.6px;width:53.5px;height:39.6px;"><span style="display:inline-block;font-size:13.5px;transform:scaleX(0.92);transform-origin:50% 50%;font-weight:bold;">Graph</span></div>
<div class="grp" style="left:931.2px;top:680.6px;width:87.8px;height:38.7px;"><div class="gl" style="left:6px;font-size:12.5px;transform:scaleX(0.82);transform-origin:0 50%">Current Object</div></div>
<div class="btn prs" style="left:933.1px;top:690.6px;width:25.5px;height:20.8px;"><span style="display:inline-block;font-size:12.5px;transform:scaleX(0.9);transform-origin:50% 50%;">A</span></div>
<div class="a" style="left:933.1px;top:711.8px;width:25.5px;height:4.2px;background:#a8d0f0"></div>
<div class="btn" style="left:960.9px;top:690.6px;width:26.0px;height:20.8px;"><span style="display:inline-block;font-size:12.5px;transform:scaleX(0.9);transform-origin:50% 50%;">B</span></div>
<div class="a" style="left:960.9px;top:711.8px;width:26.0px;height:4.2px;background:#ffff00"></div>
<div class="btn" style="left:989.2px;top:690.6px;width:26.1px;height:20.8px;"><span style="display:inline-block;font-size:12.5px;transform:scaleX(0.9);transform-origin:50% 50%;">C</span></div>
<div class="a" style="left:989.2px;top:711.8px;width:26.8px;height:4.2px;background:#ff00ff"></div>
<div class="t" style="left:208px;top:740.5px;line-height:16px;width:0;display:flex;justify-content:center;"><span style="display:inline-block;font-size:12.5px;transform:scaleX(0.95);transform-origin:50% 50%;font-weight:bold;">Timing process indicator</span></div>
<div class="ed" style="left:19.4px;top:758.6px;width:79.2px;height:18.9px;padding-left:3px;background:#00ffff;"><span style="display:inline-block;font-size:12.5px;transform:scaleX(0.85);transform-origin:0 50%;">1. Time correct</span></div>
<div class="ed" style="left:99.5px;top:758.6px;width:86.5px;height:18.9px;padding-left:3px;background:#00ffff;"><span style="display:inline-block;font-size:12.5px;transform:scaleX(0.85);transform-origin:0 50%;">2. XML element</span></div>
<div class="ed" style="left:187px;top:758.6px;width:70.8px;height:18.9px;padding-left:3px;background:#00ffff;"><span style="display:inline-block;font-size:12.5px;transform:scaleX(0.85);transform-origin:0 50%;">3. Light curve</span></div>
<div class="ed" style="left:260.2px;top:758.6px;width:78.4px;height:18.9px;padding-left:3px;"><span style="display:inline-block;font-size:12.5px;transform:scaleX(0.85);transform-origin:0 50%;">4. Diffraction tit</span></div>
<div class="ed" style="left:340.1px;top:758.6px;width:78.2px;height:18.9px;padding-left:3px;"><span style="display:inline-block;font-size:12.5px;transform:scaleX(0.85);transform-origin:0 50%;">5. Make report</span></div>
<div class="t" style="left:434.9px;top:730.2px;line-height:16px;"><span style="display:inline-block;font-size:15px;transform:scaleX(0.93);transform-origin:0 50%;font-weight:bold;">AVI filename</span></div>
<div class="t" style="left:527.5px;top:730.2px;line-height:16px;"><span style="display:inline-block;font-size:14px;transform:scaleX(0.85);transform-origin:0 50%;">:</span></div>
<div class="ed" style="left:531.2px;top:728.7px;width:495.4px;height:18.0px;padding-left:3px;font-family:'Liberation Mono',monospace;"><span style="display:inline-block;font-size:11px;transform:scaleX(0.86);transform-origin:0 50%;color:#111;">I:¥A-WMWMWMWM¥WMWMWMWM¥WMWMWMWM2025¥07-12WM¥20251128@HeckmannWMWM¥03_44_25.avi</span></div>
<div class="t" style="left:531.6px;top:757.6px;line-height:16px;"><span style="display:inline-block;font-size:14px;transform:scaleX(0.93);transform-origin:0 50%;">SharpCap version:</span></div>
<div class="ed" style="left:651.2px;top:754.2px;width:103.2px;height:19.9px;padding-left:4px;letter-spacing:0.6px"><span style="display:inline-block;font-size:13px;transform:scaleX(1.0);transform-origin:0 50%;font-weight:bold;">4. 1. 11251. 0</span></div>
<div class="t" style="left:771.1px;top:758.1px;line-height:16px;"><span style="display:inline-block;font-size:14px;transform:scaleX(0.968);transform-origin:0 50%;">Time stamp indicates</span></div>
<div class="ed" style="left:907.6px;top:754.2px;width:111.4px;height:19.9px;padding-left:3px;"><span style="display:inline-block;font-size:13.5px;transform:scaleX(0.95);transform-origin:0 50%;font-weight:bold;">FrameEnd</span></div>
<div class="win" style="left:1040px;top:8px;width:754px;height:712px;border-radius:8px 8px 6px 6px"></div>
<svg width="16" height="16" viewBox="0 0 16 16" style="position:absolute;left:1043px;top:12px">
<rect x="0" y="0.5" width="16" height="15.5" fill="#0808d8"/>
<rect x="0" y="0.5" width="7" height="5" fill="#000090" opacity="0.6"/>
<rect x="0" y="12" width="9" height="4" fill="#000070" opacity="0.7"/>
<rect x="0" y="8" width="16" height="1.2" fill="#ffff00"/>
<path d="M5.4 0.5 L6.4 6.6 L10 8.6 L6.4 10.6 L5.4 16 L4.4 10.6 L0 8.6 L4.4 6.6 Z" fill="#ffff00"/>
<g fill="#e0e0ff"><circle cx="10.5" cy="1.8" r="0.6"/><circle cx="12.6" cy="1.8" r="0.6"/><circle cx="14.6" cy="2.8" r="0.6"/>
<circle cx="10.5" cy="13.6" r="0.6"/><circle cx="12.6" cy="13.2" r="0.6"/><circle cx="14.6" cy="13.6" r="0.6"/></g>
</svg>
<div class="t" style="left:1065px;top:13.0px;line-height:16px;"><span style="display:inline-block;font-size:13.2px;transform:scaleX(0.95);transform-origin:0 50%;color:#1a1a1a;">Graph</span></div>
<div class="a" style="left:1675px;top:20px;width:10px;height:1px;background:#222"></div>
<div class="a" style="left:1720px;top:15px;width:10px;height:10px;border:1px solid #222"></div>
<svg class="a" style="left:1765px;top:14px" width="12" height="12"><path d="M1 1L11 11M11 1L1 11" stroke="#222" stroke-width="1"/></svg>
<div class="a" style="left:1048px;top:35px;width:740px;height:425px;background:#fff"></div>
<div class="t" style="left:1056.7px;top:36.6px;line-height:16px;"><span style="display:inline-block;font-size:12.8px;transform:scaleX(1.0);transform-origin:0 50%;font-weight:bold;">2025 Nov 28: (1650) Heckmann occults UCAC4 548-013480 Observed by Toshihiro Horikawa</span></div>
<div class="t" style="left:1619px;top:36.6px;line-height:16px;"><span style="display:inline-block;font-size:12.5px;transform:scaleX(1.0);transform-origin:0 50%;">/ PSF-Frame Photometry /</span></div>
<svg class="a" style="left:1048px;top:35px" width="740" height="425" viewBox="1048 35 740 425"><line x1="1099" y1="197.9" x2="1778" y2="197.9" stroke="#00e8e8" stroke-width="1.3"/><line x1="1099" y1="309.2" x2="1778" y2="309.2" stroke="#00e8e8" stroke-width="1.3"/><path d="M1097.7 105.9L1098.7 115.8L1099.7 208.8L1100.7 203.9L1101.7 169.1L1102.7 197.7L1103.7 195.6L1104.7 183.0L1105.7 183.4L1106.7 190.0L1107.8 177.4L1108.8 171.9L1109.8 224.0L1110.8 217.4L1111.8 213.2L1112.8 215.5L1113.8 139.4L1114.8 166.4L1115.8 278.4L1116.8 265.4L1117.8 175.6L1118.8 163.8L1119.8 167.9L1120.8 155.6L1121.8 227.7L1122.8 212.2L1123.8 185.9L1124.8 210.4L1125.8 224.7L1126.8 203.0L1127.8 189.1L1128.8 192.2L1129.8 159.3L1130.8 166.2L1131.8 160.5L1132.8 169.2L1133.8 155.4L1134.8 178.5L1135.8 161.2L1136.8 169.8L1137.8 167.1L1138.8 158.8L1139.8 231.7L1140.8 228.8L1141.8 234.5L1142.8 242.9L1143.8 231.1L1144.8 222.2L1145.8 210.5L1146.8 202.8L1147.8 167.4L1148.8 172.2L1149.8 190.0L1150.8 186.1L1151.8 203.2L1152.8 232.8L1153.8 241.6L1154.8 236.8L1155.8 159.9L1156.8 168.0L1157.9 164.6L1158.9 151.0L1159.9 207.0L1160.9 207.8L1161.9 257.2L1162.9 263.5L1163.9 204.7L1164.9 200.3L1165.9 234.6L1166.9 239.8L1167.9 201.5L1168.9 200.8L1169.9 213.5L1170.9 231.8L1171.9 196.8L1172.9 182.6L1173.9 248.7L1174.9 253.0L1175.9 145.2L1176.9 162.4L1177.9 169.2L1178.9 166.5L1179.9 264.5L1180.9 276.2L1181.9 159.7L1182.9 164.1L1183.9 205.6L1184.9 219.8L1185.9 162.9L1186.9 218.0L1187.9 267.5L1188.9 264.4L1189.9 165.8L1190.9 172.1L1191.9 186.5L1192.9 183.3L1193.9 170.3L1194.9 162.2L1195.9 146.9L1196.9 179.0L1197.9 166.7L1198.9 190.1L1199.9 239.9L1200.9 248.8L1201.9 203.5L1202.9 191.8L1203.9 172.0L1204.9 213.6L1205.9 240.1L1206.9 268.2L1208.0 160.7L1209.0 163.5L1210.0 282.1L1211.0 277.5L1212.0 207.6L1213.0 214.8L1214.0 166.6L1215.0 196.0L1216.0 182.7L1217.0 183.0L1218.0 236.9L1219.0 227.0L1220.0 238.9L1221.0 237.3L1222.0 214.9L1223.0 183.4L1224.0 222.4L1225.0 236.0L1226.0 159.7L1227.0 163.7L1228.0 190.4L1229.0 210.3L1230.0 104.6L1231.0 110.9L1232.0 183.5L1233.0 190.9L1234.0 201.3L1235.0 204.4L1236.0 147.1L1237.0 122.7L1238.0 170.9L1239.0 173.0L1240.0 161.9L1241.0 167.8L1242.0 209.8L1243.0 228.0L1244.0 273.5L1245.0 284.7L1246.0 188.7L1247.0 176.2L1248.0 236.8L1249.0 237.2L1250.0 234.8L1251.0 240.6L1252.0 212.1L1253.0 232.8L1254.0 174.1L1255.0 166.7L1256.0 171.3L1257.0 143.9L1258.1 213.3L1259.1 204.2L1260.1 222.3L1261.1 217.1L1262.1 154.1L1263.1 177.3L1264.1 139.8L1265.1 150.0L1266.1 344.3L1267.1 323.5L1268.1 251.3L1269.1 264.9L1270.1 209.6L1271.1 236.3L1272.1 199.9L1273.1 209.6L1274.1 212.3L1275.1 197.1L1276.1 151.3L1277.1 177.0L1278.1 215.0L1279.1 227.0L1280.1 215.8L1281.1 202.2L1282.1 205.0L1283.1 239.1L1284.1 241.7L1285.1 245.0L1286.1 213.7L1287.1 182.5L1288.1 202.0L1289.1 206.6L1290.1 223.8L1291.1 222.8L1292.1 176.0L1293.1 186.0L1294.1 181.3L1295.1 188.6L1296.1 218.1L1297.1 205.1L1298.1 162.1L1299.1 169.8L1300.1 151.0L1301.1 163.9L1302.1 201.5L1303.1 200.2L1304.1 170.2L1305.1 169.3L1306.1 282.9L1307.1 266.1L1308.2 157.4L1309.2 155.3L1310.2 180.5L1311.2 172.6L1312.2 188.4L1313.2 187.6L1314.2 209.8L1315.2 203.5L1316.2 176.9L1317.2 149.0L1318.2 178.1L1319.2 187.2L1320.2 226.8L1321.2 216.5L1322.2 180.1L1323.2 176.4L1324.2 207.5L1325.2 192.7L1326.2 215.2L1327.2 215.3L1328.2 217.8L1329.2 212.3L1330.2 201.7L1331.2 228.7L1332.2 198.5L1333.2 170.8L1334.2 237.8L1335.2 219.2L1336.2 169.3L1337.2 169.9L1338.2 276.9L1339.2 257.9L1340.2 168.6L1341.2 164.9L1342.2 159.0L1343.2 199.5L1344.2 164.1L1345.2 169.4L1346.2 174.6L1347.2 176.3L1348.2 222.0L1349.2 231.8L1350.2 160.1L1351.2 169.6L1352.2 142.4L1353.2 149.5L1354.2 234.7L1355.2 236.3L1356.2 190.6L1357.2 187.1L1358.3 188.6L1359.3 208.4L1360.3 239.0L1361.3 252.8L1362.3 166.4L1363.3 167.3L1364.3 152.4L1365.3 155.2L1366.3 153.2L1367.3 136.6L1368.3 206.4L1369.3 194.4L1370.3 258.8L1371.3 234.7L1372.3 168.5L1373.3 165.0L1374.3 182.2L1375.3 207.3L1376.3 212.1L1377.3 231.0L1378.3 178.8L1379.3 177.8L1380.3 192.7L1381.3 188.1L1382.3 147.0L1383.3 160.0L1384.3 157.6L1385.3 170.3L1386.3 229.9L1387.3 217.3L1388.3 252.5L1389.3 252.4L1390.3 234.5L1391.3 246.0L1392.3 249.8L1393.3 260.9L1394.3 154.0L1395.3 167.6L1396.3 158.1L1397.3 173.9L1398.3 210.6L1399.3 216.3L1400.3 286.1L1401.3 279.4L1402.3 229.8L1403.3 206.7L1404.3 168.8L1405.3 157.4L1406.3 169.4L1407.3 184.4L1408.4 178.2L1409.4 203.2L1410.4 187.8L1411.4 202.0L1412.4 192.0L1413.4 186.1L1414.4 178.9L1415.4 152.8L1416.4 248.5L1417.4 262.8L1418.4 159.8L1419.4 144.3L1420.4 172.0L1421.4 169.5L1422.4 187.1L1423.4 212.3L1424.4 166.7L1425.4 157.0L1426.4 227.6L1427.4 221.5L1428.4 126.0L1429.4 135.8L1430.4 172.5L1431.4 164.0L1432.4 264.2L1433.4 278.5L1434.4 121.9L1435.4 149.9L1436.4 218.3L1437.4 215.0L1438.4 221.3L1439.4 245.7L1440.4 148.4L1441.4 133.5L1442.4 209.1L1443.4 212.1L1444.4 210.3L1445.4 206.1L1446.4 172.5L1447.4 133.6L1448.4 223.8L1449.4 219.5L1450.4 257.9L1451.4 268.7L1452.4 184.2L1453.4 179.5L1454.4 237.6L1455.4 218.2L1456.4 218.2L1457.4 228.5L1458.5 287.2L1459.5 274.6L1460.5 166.9L1461.5 181.3L1462.5 202.5L1463.5 217.5L1464.5 244.3L1465.5 251.3L1466.5 258.2L1467.5 255.0L1468.5 233.8L1469.5 233.7L1470.5 144.2L1471.5 170.5L1472.5 145.4L1473.5 177.0L1474.5 237.4L1475.5 243.5L1476.5 223.4L1477.5 187.2L1478.5 202.0L1479.5 183.0L1480.5 193.4L1481.5 172.3L1482.5 196.4L1483.5 220.6L1484.5 156.7L1485.5 135.2L1486.5 168.1L1487.5 189.9L1488.5 185.9L1489.5 190.7L1490.5 180.0L1491.5 177.7L1492.5 222.8L1493.5 246.1L1494.5 191.1L1495.5 188.3L1496.5 191.8L1497.5 211.1L1498.5 140.3L1499.5 159.6L1500.5 198.9L1501.5 189.0L1502.5 165.3L1503.5 165.2L1504.5 170.5L1505.5 189.4L1506.5 202.0L1507.5 167.0L1508.6 152.3L1509.6 167.7L1510.6 228.8L1511.6 225.7L1512.6 147.4L1513.6 160.3L1514.6 148.3L1515.6 143.6L1516.6 174.0L1517.6 167.6L1518.6 199.5L1519.6 167.2L1520.6 207.9L1521.6 186.2L1522.6 269.8L1523.6 257.5L1524.6 229.6L1525.6 228.6L1526.6 186.1L1527.6 167.3L1528.6 161.3L1529.6 165.3L1530.6 179.8L1531.6 184.6L1532.6 180.3L1533.6 186.7L1534.6 177.9L1535.6 186.7L1536.6 195.2L1537.6 204.8L1538.6 153.4L1539.6 142.7L1540.6 201.2L1541.6 208.3L1542.6 226.3L1543.6 226.6L1544.6 115.5L1545.6 122.2L1546.6 144.2L1547.6 115.6L1548.6 196.7L1549.6 188.2L1550.6 164.7L1551.6 149.1L1552.6 258.8L1553.6 245.9L1554.6 211.6L1555.6 205.4L1556.6 218.0L1557.6 209.6L1558.7 237.9L1559.7 233.6L1560.7 250.6L1561.7 233.8L1562.7 198.7L1563.7 178.3L1564.7 193.7L1565.7 187.3L1566.7 180.9L1567.7 167.7L1568.7 195.4L1569.7 198.1L1570.7 209.5L1571.7 210.0L1572.7 264.1L1573.7 275.1L1574.7 263.8L1575.7 248.5L1576.7 145.5L1577.7 144.3L1578.7 174.3L1579.7 172.2L1580.7 264.0L1581.7 262.8L1582.7 193.2L1583.7 174.5L1584.7 199.0L1585.7 223.8L1586.7 183.8L1587.7 185.2L1588.7 217.9L1589.7 237.8L1590.7 179.6L1591.7 166.9L1592.7 252.9L1593.7 253.6L1594.7 139.4L1595.7 152.4L1596.7 158.8L1597.7 157.8L1598.7 255.9L1599.7 257.2L1600.7 182.1L1601.7 173.0L1602.7 171.7L1603.7 200.5L1604.7 213.0L1605.7 225.9L1606.7 202.8L1607.7 197.6L1608.8 222.6L1609.8 224.7L1610.8 215.6L1611.8 202.8L1612.8 178.1L1613.8 188.9L1614.8 166.8L1615.8 166.1L1616.8 245.0L1617.8 237.6L1618.8 208.0L1619.8 214.1L1620.8 200.9L1621.8 239.9L1622.8 166.9L1623.8 166.3L1624.8 202.4L1625.8 193.4L1626.8 240.0L1627.8 232.5L1628.8 224.3L1629.8 236.7L1630.8 168.7L1631.8 159.0L1632.8 248.4L1633.8 229.2L1634.8 168.2L1635.8 185.2L1636.8 224.3L1637.8 200.9L1638.8 218.3L1639.8 192.9L1640.8 123.3L1641.8 120.5L1642.8 203.1L1643.8 202.0L1644.8 230.8L1645.8 204.5L1646.8 238.9L1647.8 211.9L1648.8 227.4L1649.8 231.7L1650.8 215.1L1651.8 206.2L1652.8 162.6L1653.8 129.2L1654.8 185.9L1655.8 207.8L1656.8 200.0L1657.8 222.6L1658.9 239.4L1659.9 266.0L1660.9 212.3L1661.9 213.1L1662.9 200.2L1663.9 184.5L1664.9 186.2L1665.9 176.8L1666.9 212.4L1667.9 232.2L1668.9 250.0L1669.9 245.3L1670.9 196.9L1671.9 173.1L1672.9 261.6L1673.9 275.1L1674.9 163.0L1675.9 177.9L1676.9 136.6L1677.9 121.4L1678.9 250.4L1679.9 238.0L1680.9 273.6L1681.9 285.3L1682.9 231.1L1683.9 207.0L1684.9 151.0L1685.9 157.5L1686.9 141.0L1687.9 136.8L1688.9 252.6L1689.9 267.6L1690.9 132.2L1691.9 117.8L1692.9 120.5L1693.9 115.3L1694.9 195.3L1695.9 183.3L1696.9 168.2L1697.9 192.8L1698.9 208.7L1699.9 219.4L1700.9 240.7L1701.9 225.9L1702.9 242.2L1703.9 232.9L1704.9 216.4L1705.9 219.9L1706.9 222.4L1707.9 219.5L1709.0 165.4L1710.0 173.6L1711.0 150.1L1712.0 131.8L1713.0 187.0L1714.0 177.6L1715.0 142.0L1716.0 171.9L1717.0 147.3L1718.0 165.7L1719.0 171.6L1720.0 158.2L1721.0 169.1L1722.0 195.9L1723.0 184.7L1724.0 205.3L1725.0 231.0L1726.0 197.6L1727.0 205.9L1728.0 210.6L1729.0 171.5L1730.0 187.3L1731.0 219.2L1732.0 221.1L1733.0 165.8L1734.0 164.6L1735.0 130.3L1736.0 149.5L1737.0 226.5L1738.0 232.4L1739.0 243.3L1740.0 208.3L1741.0 182.2L1742.0 182.8L1743.0 221.9L1744.0 224.7L1745.0 227.3L1746.0 208.2L1747.0 159.8L1748.0 178.6L1749.0 189.8L1750.0 189.6L1751.0 236.1L1752.0 212.6L1753.0 121.0L1754.0 118.5L1755.0 184.8L1756.0 173.5L1757.0 211.3L1758.0 220.6L1759.1 193.4L1760.1 181.4L1761.1 196.8L1762.1 188.6L1763.1 235.3L1764.1 257.5L1765.1 160.7L1766.1 153.2L1767.1 194.8L1768.1 187.8L1769.1 241.9L1770.1 240.8L1771.1 222.7L1772.1 211.6L1773.1 218.4L1774.1 229.6L1775.1 200.0L1776.1 181.1L1777.1 195.3L1778.1 187.6" fill="none" stroke="#ffff00" stroke-width="1" shape-rendering="crispEdges"/><path d="M1097.7 209.8L1098.7 247.5L1099.7 255.4L1100.7 219.9L1101.7 251.0L1102.7 229.5L1103.7 196.6L1104.7 198.4L1105.7 272.2L1106.7 224.8L1107.8 179.5L1108.8 132.4L1109.8 319.7L1110.8 306.1L1111.8 270.7L1112.8 291.2L1113.8 184.1L1114.8 189.1L1115.8 263.9L1116.8 252.7L1117.8 233.3L1118.8 210.3L1119.8 208.7L1120.8 259.2L1121.8 324.3L1122.8 335.3L1123.8 376.6L1124.8 355.3L1125.8 279.6L1126.8 312.2L1127.8 296.3L1128.8 323.5L1129.8 231.7L1130.8 218.0L1131.8 274.7L1132.8 240.2L1133.8 290.5L1134.8 332.3L1135.8 307.7L1136.8 305.2L1137.8 279.0L1138.8 268.8L1139.8 210.4L1140.8 215.9L1141.8 285.9L1142.8 279.9L1143.8 280.4L1144.8 303.7L1145.8 262.9L1146.8 249.9L1147.8 237.2L1148.8 236.8L1149.8 229.5L1150.8 241.1L1151.8 206.3L1152.8 232.0L1153.8 245.6L1154.8 230.7L1155.8 185.9L1156.8 174.6L1157.9 197.1L1158.9 225.6L1159.9 273.6L1160.9 272.5L1161.9 249.5L1162.9 269.4L1163.9 250.8L1164.9 256.2L1165.9 202.3L1166.9 206.3L1167.9 200.6L1168.9 183.9L1169.9 253.9L1170.9 253.2L1171.9 225.0L1172.9 223.3L1173.9 246.7L1174.9 233.7L1175.9 262.1L1176.9 298.4L1177.9 290.7L1178.9 265.2L1179.9 204.4L1180.9 189.1L1181.9 180.2L1182.9 187.9L1183.9 242.2L1184.9 264.4L1185.9 245.8L1186.9 231.0L1187.9 220.3L1188.9 215.1L1189.9 228.9L1190.9 214.0L1191.9 199.4L1192.9 179.7L1193.9 254.8L1194.9 281.0L1195.9 364.0L1196.9 363.5L1197.9 215.6L1198.9 206.9L1199.9 249.4L1200.9 254.8L1201.9 208.8L1202.9 227.5L1203.9 311.2L1204.9 339.4L1205.9 247.4L1206.9 254.7L1208.0 263.9L1209.0 269.6L1210.0 272.2L1211.0 283.9L1212.0 231.3L1213.0 252.6L1214.0 315.0L1215.0 327.2L1216.0 201.5L1217.0 176.8L1218.0 382.5L1219.0 385.0L1220.0 232.3L1221.0 225.6L1222.0 332.9L1223.0 367.2L1224.0 275.5L1225.0 278.2L1226.0 256.9L1227.0 242.8L1228.0 214.0L1229.0 242.5L1230.0 230.3L1231.0 222.9L1232.0 235.5L1233.0 245.2L1234.0 266.4L1235.0 265.5L1236.0 213.5L1237.0 222.6L1238.0 248.5L1239.0 270.3L1240.0 241.0L1241.0 225.9L1242.0 196.7L1243.0 183.9L1244.0 232.4L1245.0 250.2L1246.0 211.9L1247.0 206.8L1248.0 227.5L1249.0 231.9L1250.0 269.0L1251.0 289.5L1252.0 282.6L1253.0 265.8L1254.0 323.5L1255.0 344.3L1256.0 310.1L1257.0 304.7L1258.1 214.3L1259.1 203.3L1260.1 274.8L1261.1 264.4L1262.1 193.5L1263.1 238.0L1264.1 200.3L1265.1 213.0L1266.1 239.6L1267.1 250.2L1268.1 264.6L1269.1 250.8L1270.1 211.8L1271.1 241.5L1272.1 339.7L1273.1 317.9L1274.1 316.2L1275.1 307.2L1276.1 289.4L1277.1 315.1L1278.1 285.5L1279.1 308.2L1280.1 236.9L1281.1 231.1L1282.1 278.1L1283.1 292.3L1284.1 250.0L1285.1 245.4L1286.1 245.1L1287.1 220.6L1288.1 232.8L1289.1 253.2L1290.1 300.9L1291.1 304.0L1292.1 216.6L1293.1 233.6L1294.1 237.7L1295.1 254.1L1296.1 281.4L1297.1 265.1L1298.1 193.8L1299.1 197.8L1300.1 249.8L1301.1 235.3L1302.1 329.5L1303.1 338.3L1304.1 204.8L1305.1 221.5L1306.1 240.6L1307.1 261.3L1308.2 221.5L1309.2 270.8L1310.2 311.1L1311.2 304.6L1312.2 322.5L1313.2 347.4L1314.2 204.3L1315.2 222.9L1316.2 209.8L1317.2 226.1L1318.2 279.7L1319.2 264.4L1320.2 241.8L1321.2 255.2L1322.2 288.7L1323.2 298.1L1324.2 256.0L1325.2 260.1L1326.2 265.7L1327.2 274.2L1328.2 355.1L1329.2 338.5L1330.2 271.7L1331.2 272.1L1332.2 219.7L1333.2 232.7L1334.2 314.9L1335.2 311.8L1336.2 222.1L1337.2 236.5L1338.2 263.9L1339.2 292.8L1340.2 248.9L1341.2 255.3L1342.2 253.8L1343.2 247.4L1344.2 214.3L1345.2 224.1L1346.2 267.8L1347.2 265.4L1348.2 275.7L1349.2 267.2L1350.2 311.5L1351.2 306.8L1352.2 192.3L1353.2 230.0L1354.2 284.6L1355.2 299.6L1356.2 203.9L1357.2 219.5L1358.3 186.9L1359.3 205.6L1360.3 269.6L1361.3 238.6L1362.3 239.8L1363.3 249.9L1364.3 266.0L1365.3 281.7L1366.3 277.8L1367.3 274.5L1368.3 267.0L1369.3 247.8L1370.3 214.4L1371.3 227.7L1372.3 249.4L1373.3 245.8L1374.3 210.5L1375.3 233.2L1376.3 249.9L1377.3 242.7L1378.3 251.6L1379.3 254.8L1380.3 226.9L1381.3 248.7L1382.3 274.9L1383.3 296.2L1384.3 373.2L1385.3 396.2L1386.3 284.6L1387.3 281.7L1388.3 154.0L1389.3 196.9L1390.3 274.1L1391.3 257.7L1392.3 194.5L1393.3 184.5L1394.3 286.1L1395.3 286.7L1396.3 327.0L1397.3 354.4L1398.3 218.1L1399.3 227.5L1400.3 257.5L1401.3 297.0L1402.3 301.9L1403.3 319.1L1404.3 248.5L1405.3 265.3L1406.3 264.4L1407.3 249.1L1408.4 297.2L1409.4 293.0L1410.4 259.7L1411.4 262.4L1412.4 253.0L1413.4 233.4L1414.4 324.7L1415.4 310.4L1416.4 347.9L1417.4 326.2L1418.4 287.2L1419.4 279.7L1420.4 190.5L1421.4 209.0L1422.4 265.2L1423.4 275.9L1424.4 274.8L1425.4 281.2L1426.4 242.8L1427.4 253.3L1428.4 153.9L1429.4 139.7L1430.4 241.9L1431.4 236.9L1432.4 338.0L1433.4 329.8L1434.4 194.0L1435.4 176.4L1436.4 267.6L1437.4 260.3L1438.4 373.9L1439.4 357.1L1440.4 267.4L1441.4 267.4L1442.4 242.8L1443.4 258.6L1444.4 255.3L1445.4 262.3L1446.4 216.2L1447.4 217.8L1448.4 212.8L1449.4 223.1L1450.4 194.2L1451.4 190.8L1452.4 287.7L1453.4 271.8L1454.4 260.7L1455.4 224.7L1456.4 258.2L1457.4 283.2L1458.5 254.4L1459.5 260.9L1460.5 272.2L1461.5 231.3L1462.5 242.2L1463.5 249.0L1464.5 296.5L1465.5 288.4L1466.5 208.3L1467.5 207.5L1468.5 219.1L1469.5 223.9L1470.5 263.0L1471.5 250.4L1472.5 227.8L1473.5 201.0L1474.5 230.4L1475.5 218.1L1476.5 235.6L1477.5 252.3L1478.5 317.0L1479.5 300.2L1480.5 248.3L1481.5 222.2L1482.5 247.3L1483.5 247.7L1484.5 269.5L1485.5 308.3L1486.5 261.2L1487.5 244.3L1488.5 257.0L1489.5 279.6L1490.5 255.6L1491.5 259.7L1492.5 194.2L1493.5 203.2L1494.5 251.1L1495.5 278.9L1496.5 213.2L1497.5 196.2L1498.5 176.6L1499.5 175.3L1500.5 266.9L1501.5 261.3L1502.5 273.6L1503.5 285.1L1504.5 247.6L1505.5 250.6L1506.5 169.2L1507.5 174.7L1508.6 186.2L1509.6 202.3L1510.6 300.1L1511.6 295.9L1512.6 205.2L1513.6 209.0L1514.6 233.3L1515.6 222.7L1516.6 303.6L1517.6 330.1L1518.6 190.9L1519.6 207.3L1520.6 209.3L1521.6 244.0L1522.6 328.2L1523.6 299.4L1524.6 366.7L1525.6 353.2L1526.6 223.5L1527.6 222.9L1528.6 214.0L1529.6 235.4L1530.6 204.3L1531.6 196.8L1532.6 228.1L1533.6 211.1L1534.6 283.1L1535.6 321.1L1536.6 285.8L1537.6 286.0L1538.6 237.7L1539.6 240.5L1540.6 282.2L1541.6 266.0L1542.6 232.0L1543.6 269.9L1544.6 245.9L1545.6 256.4L1546.6 269.4L1547.6 264.5L1548.6 216.6L1549.6 212.7L1550.6 252.0L1551.6 252.3L1552.6 220.0L1553.6 229.7L1554.6 305.5L1555.6 309.1L1556.6 267.7L1557.6 254.4L1558.7 273.6L1559.7 302.2L1560.7 205.7L1561.7 188.6L1562.7 324.6L1563.7 351.0L1564.7 232.8L1565.7 248.7L1566.7 329.9L1567.7 303.8L1568.7 248.3L1569.7 268.9L1570.7 351.2L1571.7 358.9L1572.7 255.7L1573.7 241.3L1574.7 202.6L1575.7 243.5L1576.7 164.5L1577.7 190.5L1578.7 339.0L1579.7 298.0L1580.7 232.8L1581.7 254.1L1582.7 276.9L1583.7 265.1L1584.7 301.9L1585.7 271.3L1586.7 159.9L1587.7 173.5L1588.7 238.5L1589.7 213.8L1590.7 345.0L1591.7 338.6L1592.7 195.1L1593.7 197.0L1594.7 333.2L1595.7 326.4L1596.7 200.1L1597.7 180.1L1598.7 246.8L1599.7 200.9L1600.7 265.9L1601.7 262.5L1602.7 322.2L1603.7 345.8L1604.7 237.6L1605.7 262.0L1606.7 248.2L1607.7 278.2L1608.8 249.1L1609.8 257.5L1610.8 284.9L1611.8 290.2L1612.8 307.2L1613.8 292.5L1614.8 234.5L1615.8 183.8L1616.8 234.7L1617.8 219.5L1618.8 327.3L1619.8 311.0L1620.8 302.5L1621.8 283.4L1622.8 225.4L1623.8 225.4L1624.8 206.0L1625.8 213.0L1626.8 326.6L1627.8 313.7L1628.8 212.2L1629.8 228.3L1630.8 191.6L1631.8 196.8L1632.8 258.7L1633.8 275.2L1634.8 274.6L1635.8 295.2L1636.8 318.9L1637.8 342.7L1638.8 308.6L1639.8 301.6L1640.8 227.0L1641.8 214.0L1642.8 329.2L1643.8 330.4L1644.8 219.4L1645.8 243.5L1646.8 298.9L1647.8 254.7L1648.8 198.4L1649.8 214.3L1650.8 208.7L1651.8 198.7L1652.8 154.3L1653.8 167.8L1654.8 240.3L1655.8 248.6L1656.8 323.6L1657.8 316.2L1658.9 192.9L1659.9 176.3L1660.9 285.2L1661.9 278.2L1662.9 241.3L1663.9 251.4L1664.9 246.7L1665.9 223.5L1666.9 183.3L1667.9 184.1L1668.9 292.0L1669.9 279.9L1670.9 273.7L1671.9 260.1L1672.9 230.8L1673.9 207.4L1674.9 231.6L1675.9 198.4L1676.9 272.9L1677.9 281.2L1678.9 235.3L1679.9 240.1L1680.9 207.0L1681.9 198.3L1682.9 240.5L1683.9 235.8L1684.9 144.6L1685.9 163.0L1686.9 268.9L1687.9 270.8L1688.9 253.2L1689.9 260.0L1690.9 270.4L1691.9 267.8L1692.9 241.0L1693.9 254.1L1694.9 281.0L1695.9 274.4L1696.9 304.0L1697.9 283.2L1698.9 230.9L1699.9 244.4L1700.9 293.7L1701.9 305.3L1702.9 295.5L1703.9 276.9L1704.9 279.2L1705.9 282.9L1706.9 230.8L1707.9 234.6L1709.0 299.7L1710.0 306.4L1711.0 201.0L1712.0 263.3L1713.0 229.2L1714.0 233.5L1715.0 265.8L1716.0 265.8L1717.0 255.9L1718.0 247.5L1719.0 232.8L1720.0 221.3L1721.0 335.8L1722.0 280.9L1723.0 375.4L1724.0 366.5L1725.0 347.7L1726.0 343.9L1727.0 295.8L1728.0 274.5L1729.0 251.4L1730.0 252.9L1731.0 188.8L1732.0 198.1L1733.0 222.7L1734.0 246.0L1735.0 174.2L1736.0 219.1L1737.0 228.4L1738.0 230.7L1739.0 267.6L1740.0 250.3L1741.0 286.3L1742.0 264.1L1743.0 251.7L1744.0 278.4L1745.0 337.7L1746.0 326.1L1747.0 246.6L1748.0 246.5L1749.0 246.1L1750.0 261.2L1751.0 144.4L1752.0 147.5L1753.0 262.0L1754.0 265.6L1755.0 187.5L1756.0 193.3L1757.0 301.6L1758.0 263.7L1759.1 286.9L1760.1 283.2L1761.1 194.1L1762.1 206.4L1763.1 252.4L1764.1 227.4L1765.1 293.9L1766.1 264.3L1767.1 232.8L1768.1 243.7L1769.1 296.0L1770.1 290.6L1771.1 243.7L1772.1 251.8L1773.1 276.7L1774.1 239.8L1775.1 307.2L1776.1 306.4L1777.1 242.3L1778.1 224.5" fill="none" stroke="#8c8cf0" stroke-width="1" shape-rendering="crispEdges"/><circle cx="1098.2" cy="110.9" r="2.1" fill="#ffa01e"/><circle cx="1100.2" cy="206.3" r="2.1" fill="#ffa01e"/><circle cx="1102.2" cy="183.4" r="2.1" fill="#ffa01e"/><circle cx="1104.2" cy="189.3" r="2.1" fill="#ffa01e"/><circle cx="1106.2" cy="186.7" r="2.1" fill="#ffa01e"/><circle cx="1108.3" cy="174.6" r="2.1" fill="#ffa01e"/><circle cx="1110.3" cy="220.7" r="2.1" fill="#ffa01e"/><circle cx="1112.3" cy="214.3" r="2.1" fill="#ffa01e"/><circle cx="1114.3" cy="152.9" r="2.1" fill="#ffa01e"/><circle cx="1116.3" cy="271.9" r="2.1" fill="#ffa01e"/><circle cx="1118.3" cy="169.7" r="2.1" fill="#ffa01e"/><circle cx="1120.3" cy="161.7" r="2.1" fill="#ffa01e"/><circle cx="1122.3" cy="220.0" r="2.1" fill="#ffa01e"/><circle cx="1124.3" cy="198.1" r="2.1" fill="#ffa01e"/><circle cx="1126.3" cy="213.8" r="2.1" fill="#ffa01e"/><circle cx="1128.3" cy="190.6" r="2.1" fill="#ffa01e"/><circle cx="1130.3" cy="162.8" r="2.1" fill="#ffa01e"/><circle cx="1132.3" cy="164.8" r="2.1" fill="#ffa01e"/><circle cx="1134.3" cy="167.0" r="2.1" fill="#ffa01e"/><circle cx="1136.3" cy="165.5" r="2.1" fill="#ffa01e"/><circle cx="1138.3" cy="163.0" r="2.1" fill="#ffa01e"/><circle cx="1140.3" cy="230.2" r="2.1" fill="#ffa01e"/><circle cx="1142.3" cy="238.7" r="2.1" fill="#ffa01e"/><circle cx="1144.3" cy="226.6" r="2.1" fill="#ffa01e"/><circle cx="1146.3" cy="206.7" r="2.1" fill="#ffa01e"/><circle cx="1148.3" cy="169.8" r="2.1" fill="#ffa01e"/><circle cx="1150.3" cy="188.0" r="2.1" fill="#ffa01e"/><circle cx="1152.3" cy="218.0" r="2.1" fill="#ffa01e"/><circle cx="1154.3" cy="239.2" r="2.1" fill="#ffa01e"/><circle cx="1156.3" cy="164.0" r="2.1" fill="#ffa01e"/><circle cx="1158.4" cy="157.8" r="2.1" fill="#ffa01e"/><circle cx="1160.4" cy="207.4" r="2.1" fill="#ffa01e"/><circle cx="1162.4" cy="260.4" r="2.1" fill="#ffa01e"/><circle cx="1164.4" cy="202.5" r="2.1" fill="#ffa01e"/><circle cx="1166.4" cy="237.2" r="2.1" fill="#ffa01e"/><circle cx="1168.4" cy="201.1" r="2.1" fill="#ffa01e"/><circle cx="1170.4" cy="222.6" r="2.1" fill="#ffa01e"/><circle cx="1172.4" cy="189.7" r="2.1" fill="#ffa01e"/><circle cx="1174.4" cy="250.9" r="2.1" fill="#ffa01e"/><circle cx="1176.4" cy="153.8" r="2.1" fill="#ffa01e"/><circle cx="1178.4" cy="167.8" r="2.1" fill="#ffa01e"/><circle cx="1180.4" cy="270.3" r="2.1" fill="#ffa01e"/><circle cx="1182.4" cy="161.9" r="2.1" fill="#ffa01e"/><circle cx="1184.4" cy="212.7" r="2.1" fill="#ffa01e"/><circle cx="1186.4" cy="190.5" r="2.1" fill="#ffa01e"/><circle cx="1188.4" cy="266.0" r="2.1" fill="#ffa01e"/><circle cx="1190.4" cy="169.0" r="2.1" fill="#ffa01e"/><circle cx="1192.4" cy="184.9" r="2.1" fill="#ffa01e"/><circle cx="1194.4" cy="166.3" r="2.1" fill="#ffa01e"/><circle cx="1196.4" cy="163.0" r="2.1" fill="#ffa01e"/><circle cx="1198.4" cy="178.4" r="2.1" fill="#ffa01e"/><circle cx="1200.4" cy="244.4" r="2.1" fill="#ffa01e"/><circle cx="1202.4" cy="197.6" r="2.1" fill="#ffa01e"/><circle cx="1204.4" cy="192.8" r="2.1" fill="#ffa01e"/><circle cx="1206.4" cy="254.2" r="2.1" fill="#ffa01e"/><circle cx="1208.5" cy="162.1" r="2.1" fill="#ffa01e"/><circle cx="1210.5" cy="279.8" r="2.1" fill="#ffa01e"/><circle cx="1212.5" cy="211.2" r="2.1" fill="#ffa01e"/><circle cx="1214.5" cy="181.3" r="2.1" fill="#ffa01e"/><circle cx="1216.5" cy="182.8" r="2.1" fill="#ffa01e"/><circle cx="1218.5" cy="232.0" r="2.1" fill="#ffa01e"/><circle cx="1220.5" cy="238.1" r="2.1" fill="#ffa01e"/><circle cx="1222.5" cy="199.2" r="2.1" fill="#ffa01e"/><circle cx="1224.5" cy="229.2" r="2.1" fill="#ffa01e"/><circle cx="1226.5" cy="161.7" r="2.1" fill="#ffa01e"/><circle cx="1228.5" cy="200.4" r="2.1" fill="#ffa01e"/><circle cx="1230.5" cy="107.7" r="2.1" fill="#ffa01e"/><circle cx="1232.5" cy="187.2" r="2.1" fill="#ffa01e"/><circle cx="1234.5" cy="202.8" r="2.1" fill="#ffa01e"/><circle cx="1236.5" cy="134.9" r="2.1" fill="#ffa01e"/><circle cx="1238.5" cy="171.9" r="2.1" fill="#ffa01e"/><circle cx="1240.5" cy="164.8" r="2.1" fill="#ffa01e"/><circle cx="1242.5" cy="218.9" r="2.1" fill="#ffa01e"/><circle cx="1244.5" cy="279.1" r="2.1" fill="#ffa01e"/><circle cx="1246.5" cy="182.4" r="2.1" fill="#ffa01e"/><circle cx="1248.5" cy="237.0" r="2.1" fill="#ffa01e"/><circle cx="1250.5" cy="237.7" r="2.1" fill="#ffa01e"/><circle cx="1252.5" cy="222.5" r="2.1" fill="#ffa01e"/><circle cx="1254.5" cy="170.4" r="2.1" fill="#ffa01e"/><circle cx="1256.5" cy="157.6" r="2.1" fill="#ffa01e"/><circle cx="1258.6" cy="208.8" r="2.1" fill="#ffa01e"/><circle cx="1260.6" cy="219.7" r="2.1" fill="#ffa01e"/><circle cx="1262.6" cy="165.7" r="2.1" fill="#ffa01e"/><circle cx="1264.6" cy="144.9" r="2.1" fill="#ffa01e"/><circle cx="1266.6" cy="333.9" r="2.1" fill="#ffa01e"/><circle cx="1268.6" cy="258.1" r="2.1" fill="#ffa01e"/><circle cx="1270.6" cy="223.0" r="2.1" fill="#ffa01e"/><circle cx="1272.6" cy="204.7" r="2.1" fill="#ffa01e"/><circle cx="1274.6" cy="204.7" r="2.1" fill="#ffa01e"/><circle cx="1276.6" cy="164.1" r="2.1" fill="#ffa01e"/><circle cx="1278.6" cy="221.0" r="2.1" fill="#ffa01e"/><circle cx="1280.6" cy="209.0" r="2.1" fill="#ffa01e"/><circle cx="1282.6" cy="222.1" r="2.1" fill="#ffa01e"/><circle cx="1284.6" cy="243.4" r="2.1" fill="#ffa01e"/><circle cx="1286.6" cy="198.1" r="2.1" fill="#ffa01e"/><circle cx="1288.6" cy="204.3" r="2.1" fill="#ffa01e"/><circle cx="1290.6" cy="223.3" r="2.1" fill="#ffa01e"/><circle cx="1292.6" cy="181.0" r="2.1" fill="#ffa01e"/><circle cx="1294.6" cy="184.9" r="2.1" fill="#ffa01e"/><circle cx="1296.6" cy="211.6" r="2.1" fill="#ffa01e"/><circle cx="1298.6" cy="166.0" r="2.1" fill="#ffa01e"/><circle cx="1300.6" cy="157.4" r="2.1" fill="#ffa01e"/><circle cx="1302.6" cy="200.8" r="2.1" fill="#ffa01e"/><circle cx="1304.6" cy="169.7" r="2.1" fill="#ffa01e"/><circle cx="1306.6" cy="274.5" r="2.1" fill="#ffa01e"/><circle cx="1308.7" cy="156.4" r="2.1" fill="#ffa01e"/><circle cx="1310.7" cy="176.5" r="2.1" fill="#ffa01e"/><circle cx="1312.7" cy="188.0" r="2.1" fill="#ffa01e"/><circle cx="1314.7" cy="206.7" r="2.1" fill="#ffa01e"/><circle cx="1316.7" cy="163.0" r="2.1" fill="#ffa01e"/><circle cx="1318.7" cy="182.6" r="2.1" fill="#ffa01e"/><circle cx="1320.7" cy="221.7" r="2.1" fill="#ffa01e"/><circle cx="1322.7" cy="178.2" r="2.1" fill="#ffa01e"/><circle cx="1324.7" cy="200.1" r="2.1" fill="#ffa01e"/><circle cx="1326.7" cy="215.2" r="2.1" fill="#ffa01e"/><circle cx="1328.7" cy="215.0" r="2.1" fill="#ffa01e"/><circle cx="1330.7" cy="215.2" r="2.1" fill="#ffa01e"/><circle cx="1332.7" cy="184.7" r="2.1" fill="#ffa01e"/><circle cx="1334.7" cy="228.5" r="2.1" fill="#ffa01e"/><circle cx="1336.7" cy="169.6" r="2.1" fill="#ffa01e"/><circle cx="1338.7" cy="267.4" r="2.1" fill="#ffa01e"/><circle cx="1340.7" cy="166.7" r="2.1" fill="#ffa01e"/><circle cx="1342.7" cy="179.2" r="2.1" fill="#ffa01e"/><circle cx="1344.7" cy="166.7" r="2.1" fill="#ffa01e"/><circle cx="1346.7" cy="175.4" r="2.1" fill="#ffa01e"/><circle cx="1348.7" cy="226.9" r="2.1" fill="#ffa01e"/><circle cx="1350.7" cy="164.9" r="2.1" fill="#ffa01e"/><circle cx="1352.7" cy="145.9" r="2.1" fill="#ffa01e"/><circle cx="1354.7" cy="235.5" r="2.1" fill="#ffa01e"/><circle cx="1356.7" cy="188.9" r="2.1" fill="#ffa01e"/><circle cx="1358.8" cy="198.5" r="2.1" fill="#ffa01e"/><circle cx="1360.8" cy="245.9" r="2.1" fill="#ffa01e"/><circle cx="1362.8" cy="166.9" r="2.1" fill="#ffa01e"/><circle cx="1364.8" cy="153.8" r="2.1" fill="#ffa01e"/><circle cx="1366.8" cy="144.9" r="2.1" fill="#ffa01e"/><circle cx="1368.8" cy="200.4" r="2.1" fill="#ffa01e"/><circle cx="1370.8" cy="246.8" r="2.1" fill="#ffa01e"/><circle cx="1372.8" cy="166.7" r="2.1" fill="#ffa01e"/><circle cx="1374.8" cy="194.8" r="2.1" fill="#ffa01e"/><circle cx="1376.8" cy="221.5" r="2.1" fill="#ffa01e"/><circle cx="1378.8" cy="178.3" r="2.1" fill="#ffa01e"/><circle cx="1380.8" cy="190.4" r="2.1" fill="#ffa01e"/><circle cx="1382.8" cy="153.5" r="2.1" fill="#ffa01e"/><circle cx="1384.8" cy="164.0" r="2.1" fill="#ffa01e"/><circle cx="1386.8" cy="223.6" r="2.1" fill="#ffa01e"/><circle cx="1388.8" cy="252.4" r="2.1" fill="#ffa01e"/><circle cx="1390.8" cy="240.2" r="2.1" fill="#ffa01e"/><circle cx="1392.8" cy="255.4" r="2.1" fill="#ffa01e"/><circle cx="1394.8" cy="160.8" r="2.1" fill="#ffa01e"/><circle cx="1396.8" cy="166.0" r="2.1" fill="#ffa01e"/><circle cx="1398.8" cy="213.4" r="2.1" fill="#ffa01e"/><circle cx="1400.8" cy="282.7" r="2.1" fill="#ffa01e"/><circle cx="1402.8" cy="218.3" r="2.1" fill="#ffa01e"/><circle cx="1404.8" cy="163.1" r="2.1" fill="#ffa01e"/><circle cx="1406.8" cy="176.9" r="2.1" fill="#ffa01e"/><circle cx="1408.9" cy="190.7" r="2.1" fill="#ffa01e"/><circle cx="1410.9" cy="194.9" r="2.1" fill="#ffa01e"/><circle cx="1412.9" cy="189.0" r="2.1" fill="#ffa01e"/><circle cx="1414.9" cy="165.8" r="2.1" fill="#ffa01e"/><circle cx="1416.9" cy="255.7" r="2.1" fill="#ffa01e"/><circle cx="1418.9" cy="152.0" r="2.1" fill="#ffa01e"/><circle cx="1420.9" cy="170.7" r="2.1" fill="#ffa01e"/><circle cx="1422.9" cy="199.7" r="2.1" fill="#ffa01e"/><circle cx="1424.9" cy="161.9" r="2.1" fill="#ffa01e"/><circle cx="1426.9" cy="224.5" r="2.1" fill="#ffa01e"/><circle cx="1428.9" cy="130.9" r="2.1" fill="#ffa01e"/><circle cx="1430.9" cy="168.3" r="2.1" fill="#ffa01e"/><circle cx="1432.9" cy="271.3" r="2.1" fill="#ffa01e"/><circle cx="1434.9" cy="135.9" r="2.1" fill="#ffa01e"/><circle cx="1436.9" cy="216.7" r="2.1" fill="#ffa01e"/><circle cx="1438.9" cy="233.5" r="2.1" fill="#ffa01e"/><circle cx="1440.9" cy="140.9" r="2.1" fill="#ffa01e"/><circle cx="1442.9" cy="210.6" r="2.1" fill="#ffa01e"/><circle cx="1444.9" cy="208.2" r="2.1" fill="#ffa01e"/><circle cx="1446.9" cy="153.0" r="2.1" fill="#ffa01e"/><circle cx="1448.9" cy="221.7" r="2.1" fill="#ffa01e"/><circle cx="1450.9" cy="263.3" r="2.1" fill="#ffa01e"/><circle cx="1452.9" cy="181.9" r="2.1" fill="#ffa01e"/><circle cx="1454.9" cy="227.9" r="2.1" fill="#ffa01e"/><circle cx="1456.9" cy="223.3" r="2.1" fill="#ffa01e"/><circle cx="1459.0" cy="280.9" r="2.1" fill="#ffa01e"/><circle cx="1461.0" cy="174.1" r="2.1" fill="#ffa01e"/><circle cx="1463.0" cy="210.0" r="2.1" fill="#ffa01e"/><circle cx="1465.0" cy="247.8" r="2.1" fill="#ffa01e"/><circle cx="1467.0" cy="256.6" r="2.1" fill="#ffa01e"/><circle cx="1469.0" cy="233.8" r="2.1" fill="#ffa01e"/><circle cx="1471.0" cy="157.4" r="2.1" fill="#ffa01e"/><circle cx="1473.0" cy="161.2" r="2.1" fill="#ffa01e"/><circle cx="1475.0" cy="240.5" r="2.1" fill="#ffa01e"/><circle cx="1477.0" cy="205.3" r="2.1" fill="#ffa01e"/><circle cx="1479.0" cy="192.5" r="2.1" fill="#ffa01e"/><circle cx="1481.0" cy="182.8" r="2.1" fill="#ffa01e"/><circle cx="1483.0" cy="208.5" r="2.1" fill="#ffa01e"/><circle cx="1485.0" cy="145.9" r="2.1" fill="#ffa01e"/><circle cx="1487.0" cy="179.0" r="2.1" fill="#ffa01e"/><circle cx="1489.0" cy="188.3" r="2.1" fill="#ffa01e"/><circle cx="1491.0" cy="178.8" r="2.1" fill="#ffa01e"/><circle cx="1493.0" cy="234.5" r="2.1" fill="#ffa01e"/><circle cx="1495.0" cy="189.7" r="2.1" fill="#ffa01e"/><circle cx="1497.0" cy="201.4" r="2.1" fill="#ffa01e"/><circle cx="1499.0" cy="149.9" r="2.1" fill="#ffa01e"/><circle cx="1501.0" cy="194.0" r="2.1" fill="#ffa01e"/><circle cx="1503.0" cy="165.3" r="2.1" fill="#ffa01e"/><circle cx="1505.0" cy="180.0" r="2.1" fill="#ffa01e"/><circle cx="1507.0" cy="184.5" r="2.1" fill="#ffa01e"/><circle cx="1509.1" cy="160.0" r="2.1" fill="#ffa01e"/><circle cx="1511.1" cy="227.3" r="2.1" fill="#ffa01e"/><circle cx="1513.1" cy="153.8" r="2.1" fill="#ffa01e"/><circle cx="1515.1" cy="145.9" r="2.1" fill="#ffa01e"/><circle cx="1517.1" cy="170.8" r="2.1" fill="#ffa01e"/><circle cx="1519.1" cy="183.3" r="2.1" fill="#ffa01e"/><circle cx="1521.1" cy="197.1" r="2.1" fill="#ffa01e"/><circle cx="1523.1" cy="263.7" r="2.1" fill="#ffa01e"/><circle cx="1525.1" cy="229.1" r="2.1" fill="#ffa01e"/><circle cx="1527.1" cy="176.7" r="2.1" fill="#ffa01e"/><circle cx="1529.1" cy="163.3" r="2.1" fill="#ffa01e"/><circle cx="1531.1" cy="182.2" r="2.1" fill="#ffa01e"/><circle cx="1533.1" cy="183.5" r="2.1" fill="#ffa01e"/><circle cx="1535.1" cy="182.3" r="2.1" fill="#ffa01e"/><circle cx="1537.1" cy="200.0" r="2.1" fill="#ffa01e"/><circle cx="1539.1" cy="148.0" r="2.1" fill="#ffa01e"/><circle cx="1541.1" cy="204.8" r="2.1" fill="#ffa01e"/><circle cx="1543.1" cy="226.4" r="2.1" fill="#ffa01e"/><circle cx="1545.1" cy="118.9" r="2.1" fill="#ffa01e"/><circle cx="1547.1" cy="129.9" r="2.1" fill="#ffa01e"/><circle cx="1549.1" cy="192.4" r="2.1" fill="#ffa01e"/><circle cx="1551.1" cy="156.9" r="2.1" fill="#ffa01e"/><circle cx="1553.1" cy="252.4" r="2.1" fill="#ffa01e"/><circle cx="1555.1" cy="208.5" r="2.1" fill="#ffa01e"/><circle cx="1557.1" cy="213.8" r="2.1" fill="#ffa01e"/><circle cx="1559.2" cy="235.7" r="2.1" fill="#ffa01e"/><circle cx="1561.2" cy="242.2" r="2.1" fill="#ffa01e"/><circle cx="1563.2" cy="188.5" r="2.1" fill="#ffa01e"/><circle cx="1565.2" cy="190.5" r="2.1" fill="#ffa01e"/><circle cx="1567.2" cy="174.3" r="2.1" fill="#ffa01e"/><circle cx="1569.2" cy="196.7" r="2.1" fill="#ffa01e"/><circle cx="1571.2" cy="209.7" r="2.1" fill="#ffa01e"/><circle cx="1573.2" cy="269.6" r="2.1" fill="#ffa01e"/><circle cx="1575.2" cy="256.2" r="2.1" fill="#ffa01e"/><circle cx="1577.2" cy="144.9" r="2.1" fill="#ffa01e"/><circle cx="1579.2" cy="173.2" r="2.1" fill="#ffa01e"/><circle cx="1581.2" cy="263.4" r="2.1" fill="#ffa01e"/><circle cx="1583.2" cy="183.9" r="2.1" fill="#ffa01e"/><circle cx="1585.2" cy="211.4" r="2.1" fill="#ffa01e"/><circle cx="1587.2" cy="184.5" r="2.1" fill="#ffa01e"/><circle cx="1589.2" cy="227.8" r="2.1" fill="#ffa01e"/><circle cx="1591.2" cy="173.3" r="2.1" fill="#ffa01e"/><circle cx="1593.2" cy="253.2" r="2.1" fill="#ffa01e"/><circle cx="1595.2" cy="145.9" r="2.1" fill="#ffa01e"/><circle cx="1597.2" cy="158.3" r="2.1" fill="#ffa01e"/><circle cx="1599.2" cy="256.6" r="2.1" fill="#ffa01e"/><circle cx="1601.2" cy="177.6" r="2.1" fill="#ffa01e"/><circle cx="1603.2" cy="186.1" r="2.1" fill="#ffa01e"/><circle cx="1605.2" cy="219.4" r="2.1" fill="#ffa01e"/><circle cx="1607.2" cy="200.2" r="2.1" fill="#ffa01e"/><circle cx="1609.3" cy="223.7" r="2.1" fill="#ffa01e"/><circle cx="1611.3" cy="209.2" r="2.1" fill="#ffa01e"/><circle cx="1613.3" cy="183.5" r="2.1" fill="#ffa01e"/><circle cx="1615.3" cy="166.5" r="2.1" fill="#ffa01e"/><circle cx="1617.3" cy="241.3" r="2.1" fill="#ffa01e"/><circle cx="1619.3" cy="211.0" r="2.1" fill="#ffa01e"/><circle cx="1621.3" cy="220.4" r="2.1" fill="#ffa01e"/><circle cx="1623.3" cy="166.6" r="2.1" fill="#ffa01e"/><circle cx="1625.3" cy="197.9" r="2.1" fill="#ffa01e"/><circle cx="1627.3" cy="236.3" r="2.1" fill="#ffa01e"/><circle cx="1629.3" cy="230.5" r="2.1" fill="#ffa01e"/><circle cx="1631.3" cy="163.8" r="2.1" fill="#ffa01e"/><circle cx="1633.3" cy="238.8" r="2.1" fill="#ffa01e"/><circle cx="1635.3" cy="176.7" r="2.1" fill="#ffa01e"/><circle cx="1637.3" cy="212.6" r="2.1" fill="#ffa01e"/><circle cx="1639.3" cy="205.6" r="2.1" fill="#ffa01e"/><circle cx="1641.3" cy="121.9" r="2.1" fill="#ffa01e"/><circle cx="1643.3" cy="202.6" r="2.1" fill="#ffa01e"/><circle cx="1645.3" cy="217.6" r="2.1" fill="#ffa01e"/><circle cx="1647.3" cy="225.4" r="2.1" fill="#ffa01e"/><circle cx="1649.3" cy="229.5" r="2.1" fill="#ffa01e"/><circle cx="1651.3" cy="210.6" r="2.1" fill="#ffa01e"/><circle cx="1653.3" cy="145.9" r="2.1" fill="#ffa01e"/><circle cx="1655.3" cy="196.8" r="2.1" fill="#ffa01e"/><circle cx="1657.3" cy="211.3" r="2.1" fill="#ffa01e"/><circle cx="1659.4" cy="252.7" r="2.1" fill="#ffa01e"/><circle cx="1661.4" cy="212.7" r="2.1" fill="#ffa01e"/><circle cx="1663.4" cy="192.3" r="2.1" fill="#ffa01e"/><circle cx="1665.4" cy="181.5" r="2.1" fill="#ffa01e"/><circle cx="1667.4" cy="222.3" r="2.1" fill="#ffa01e"/><circle cx="1669.4" cy="247.7" r="2.1" fill="#ffa01e"/><circle cx="1671.4" cy="185.0" r="2.1" fill="#ffa01e"/><circle cx="1673.4" cy="268.3" r="2.1" fill="#ffa01e"/><circle cx="1675.4" cy="170.5" r="2.1" fill="#ffa01e"/><circle cx="1677.4" cy="129.0" r="2.1" fill="#ffa01e"/><circle cx="1679.4" cy="244.2" r="2.1" fill="#ffa01e"/><circle cx="1681.4" cy="279.4" r="2.1" fill="#ffa01e"/><circle cx="1683.4" cy="219.1" r="2.1" fill="#ffa01e"/><circle cx="1685.4" cy="154.3" r="2.1" fill="#ffa01e"/><circle cx="1687.4" cy="138.9" r="2.1" fill="#ffa01e"/><circle cx="1689.4" cy="260.1" r="2.1" fill="#ffa01e"/><circle cx="1691.4" cy="125.0" r="2.1" fill="#ffa01e"/><circle cx="1693.4" cy="117.9" r="2.1" fill="#ffa01e"/><circle cx="1695.4" cy="189.3" r="2.1" fill="#ffa01e"/><circle cx="1697.4" cy="180.5" r="2.1" fill="#ffa01e"/><circle cx="1699.4" cy="214.0" r="2.1" fill="#ffa01e"/><circle cx="1701.4" cy="233.3" r="2.1" fill="#ffa01e"/><circle cx="1703.4" cy="237.5" r="2.1" fill="#ffa01e"/><circle cx="1705.4" cy="218.1" r="2.1" fill="#ffa01e"/><circle cx="1707.4" cy="220.9" r="2.1" fill="#ffa01e"/><circle cx="1709.5" cy="169.5" r="2.1" fill="#ffa01e"/><circle cx="1711.5" cy="140.9" r="2.1" fill="#ffa01e"/><circle cx="1713.5" cy="182.3" r="2.1" fill="#ffa01e"/><circle cx="1715.5" cy="156.9" r="2.1" fill="#ffa01e"/><circle cx="1717.5" cy="156.5" r="2.1" fill="#ffa01e"/><circle cx="1719.5" cy="164.9" r="2.1" fill="#ffa01e"/><circle cx="1721.5" cy="182.5" r="2.1" fill="#ffa01e"/><circle cx="1723.5" cy="195.0" r="2.1" fill="#ffa01e"/><circle cx="1725.5" cy="214.3" r="2.1" fill="#ffa01e"/><circle cx="1727.5" cy="208.2" r="2.1" fill="#ffa01e"/><circle cx="1729.5" cy="179.4" r="2.1" fill="#ffa01e"/><circle cx="1731.5" cy="220.1" r="2.1" fill="#ffa01e"/><circle cx="1733.5" cy="165.2" r="2.1" fill="#ffa01e"/><circle cx="1735.5" cy="139.9" r="2.1" fill="#ffa01e"/><circle cx="1737.5" cy="229.4" r="2.1" fill="#ffa01e"/><circle cx="1739.5" cy="225.8" r="2.1" fill="#ffa01e"/><circle cx="1741.5" cy="182.5" r="2.1" fill="#ffa01e"/><circle cx="1743.5" cy="223.3" r="2.1" fill="#ffa01e"/><circle cx="1745.5" cy="217.7" r="2.1" fill="#ffa01e"/><circle cx="1747.5" cy="169.2" r="2.1" fill="#ffa01e"/><circle cx="1749.5" cy="189.7" r="2.1" fill="#ffa01e"/><circle cx="1751.5" cy="224.3" r="2.1" fill="#ffa01e"/><circle cx="1753.5" cy="119.8" r="2.1" fill="#ffa01e"/><circle cx="1755.5" cy="179.2" r="2.1" fill="#ffa01e"/><circle cx="1757.5" cy="215.9" r="2.1" fill="#ffa01e"/><circle cx="1759.6" cy="187.4" r="2.1" fill="#ffa01e"/><circle cx="1761.6" cy="192.7" r="2.1" fill="#ffa01e"/><circle cx="1763.6" cy="246.4" r="2.1" fill="#ffa01e"/><circle cx="1765.6" cy="156.9" r="2.1" fill="#ffa01e"/><circle cx="1767.6" cy="191.3" r="2.1" fill="#ffa01e"/><circle cx="1769.6" cy="241.3" r="2.1" fill="#ffa01e"/><circle cx="1771.6" cy="217.2" r="2.1" fill="#ffa01e"/><circle cx="1773.6" cy="224.0" r="2.1" fill="#ffa01e"/><circle cx="1775.6" cy="190.6" r="2.1" fill="#ffa01e"/><circle cx="1777.6" cy="191.4" r="2.1" fill="#ffa01e"/><circle cx="1098.2" cy="228.7" r="2.2" fill="#0000e6"/><circle cx="1100.2" cy="237.7" r="2.2" fill="#0000e6"/><circle cx="1102.2" cy="240.3" r="2.2" fill="#0000e6"/><circle cx="1104.2" cy="197.5" r="2.2" fill="#0000e6"/><circle cx="1106.2" cy="248.5" r="2.2" fill="#0000e6"/><circle cx="1108.3" cy="155.9" r="2.2" fill="#0000e6"/><circle cx="1110.3" cy="312.9" r="2.2" fill="#0000e6"/><circle cx="1112.3" cy="281.0" r="2.2" fill="#0000e6"/><circle cx="1114.3" cy="186.6" r="2.2" fill="#0000e6"/><circle cx="1116.3" cy="258.3" r="2.2" fill="#0000e6"/><circle cx="1118.3" cy="221.8" r="2.2" fill="#0000e6"/><circle cx="1120.3" cy="234.0" r="2.2" fill="#0000e6"/><circle cx="1122.3" cy="329.8" r="2.2" fill="#0000e6"/><circle cx="1124.3" cy="366.0" r="2.2" fill="#0000e6"/><circle cx="1126.3" cy="295.9" r="2.2" fill="#0000e6"/><circle cx="1128.3" cy="309.9" r="2.2" fill="#0000e6"/><circle cx="1130.3" cy="224.8" r="2.2" fill="#0000e6"/><circle cx="1132.3" cy="257.4" r="2.2" fill="#0000e6"/><circle cx="1134.3" cy="311.4" r="2.2" fill="#0000e6"/><circle cx="1136.3" cy="306.5" r="2.2" fill="#0000e6"/><circle cx="1138.3" cy="273.9" r="2.2" fill="#0000e6"/><circle cx="1140.3" cy="213.2" r="2.2" fill="#0000e6"/><circle cx="1142.3" cy="282.9" r="2.2" fill="#0000e6"/><circle cx="1144.3" cy="292.0" r="2.2" fill="#0000e6"/><circle cx="1146.3" cy="256.4" r="2.2" fill="#0000e6"/><circle cx="1148.3" cy="237.0" r="2.2" fill="#0000e6"/><circle cx="1150.3" cy="235.3" r="2.2" fill="#0000e6"/><circle cx="1152.3" cy="219.1" r="2.2" fill="#0000e6"/><circle cx="1154.3" cy="238.2" r="2.2" fill="#0000e6"/><circle cx="1156.3" cy="180.2" r="2.2" fill="#0000e6"/><circle cx="1158.4" cy="211.4" r="2.2" fill="#0000e6"/><circle cx="1160.4" cy="273.0" r="2.2" fill="#0000e6"/><circle cx="1162.4" cy="259.5" r="2.2" fill="#0000e6"/><circle cx="1164.4" cy="253.5" r="2.2" fill="#0000e6"/><circle cx="1166.4" cy="204.3" r="2.2" fill="#0000e6"/><circle cx="1168.4" cy="192.3" r="2.2" fill="#0000e6"/><circle cx="1170.4" cy="253.5" r="2.2" fill="#0000e6"/><circle cx="1172.4" cy="224.1" r="2.2" fill="#0000e6"/><circle cx="1174.4" cy="240.2" r="2.2" fill="#0000e6"/><circle cx="1176.4" cy="280.3" r="2.2" fill="#0000e6"/><circle cx="1178.4" cy="277.9" r="2.2" fill="#0000e6"/><circle cx="1180.4" cy="196.8" r="2.2" fill="#0000e6"/><circle cx="1182.4" cy="184.0" r="2.2" fill="#0000e6"/><circle cx="1184.4" cy="253.3" r="2.2" fill="#0000e6"/><circle cx="1186.4" cy="238.4" r="2.2" fill="#0000e6"/><circle cx="1188.4" cy="217.7" r="2.2" fill="#0000e6"/><circle cx="1190.4" cy="221.4" r="2.2" fill="#0000e6"/><circle cx="1192.4" cy="189.5" r="2.2" fill="#0000e6"/><circle cx="1194.4" cy="267.9" r="2.2" fill="#0000e6"/><circle cx="1196.4" cy="363.7" r="2.2" fill="#0000e6"/><circle cx="1198.4" cy="211.2" r="2.2" fill="#0000e6"/><circle cx="1200.4" cy="252.1" r="2.2" fill="#0000e6"/><circle cx="1202.4" cy="218.2" r="2.2" fill="#0000e6"/><circle cx="1204.4" cy="325.3" r="2.2" fill="#0000e6"/><circle cx="1206.4" cy="251.0" r="2.2" fill="#0000e6"/><circle cx="1208.5" cy="266.7" r="2.2" fill="#0000e6"/><circle cx="1210.5" cy="278.0" r="2.2" fill="#0000e6"/><circle cx="1212.5" cy="242.0" r="2.2" fill="#0000e6"/><circle cx="1214.5" cy="321.1" r="2.2" fill="#0000e6"/><circle cx="1216.5" cy="189.2" r="2.2" fill="#0000e6"/><circle cx="1218.5" cy="383.8" r="2.2" fill="#0000e6"/><circle cx="1220.5" cy="229.0" r="2.2" fill="#0000e6"/><circle cx="1222.5" cy="350.0" r="2.2" fill="#0000e6"/><circle cx="1224.5" cy="276.8" r="2.2" fill="#0000e6"/><circle cx="1226.5" cy="249.8" r="2.2" fill="#0000e6"/><circle cx="1228.5" cy="228.3" r="2.2" fill="#0000e6"/><circle cx="1230.5" cy="226.6" r="2.2" fill="#0000e6"/><circle cx="1232.5" cy="240.3" r="2.2" fill="#0000e6"/><circle cx="1234.5" cy="266.0" r="2.2" fill="#0000e6"/><circle cx="1236.5" cy="218.0" r="2.2" fill="#0000e6"/><circle cx="1238.5" cy="259.4" r="2.2" fill="#0000e6"/><circle cx="1240.5" cy="233.5" r="2.2" fill="#0000e6"/><circle cx="1242.5" cy="190.3" r="2.2" fill="#0000e6"/><circle cx="1244.5" cy="241.3" r="2.2" fill="#0000e6"/><circle cx="1246.5" cy="209.3" r="2.2" fill="#0000e6"/><circle cx="1248.5" cy="229.7" r="2.2" fill="#0000e6"/><circle cx="1250.5" cy="279.3" r="2.2" fill="#0000e6"/><circle cx="1252.5" cy="274.2" r="2.2" fill="#0000e6"/><circle cx="1254.5" cy="333.9" r="2.2" fill="#0000e6"/><circle cx="1256.5" cy="307.4" r="2.2" fill="#0000e6"/><circle cx="1258.6" cy="208.8" r="2.2" fill="#0000e6"/><circle cx="1260.6" cy="269.6" r="2.2" fill="#0000e6"/><circle cx="1262.6" cy="215.7" r="2.2" fill="#0000e6"/><circle cx="1264.6" cy="206.6" r="2.2" fill="#0000e6"/><circle cx="1266.6" cy="244.9" r="2.2" fill="#0000e6"/><circle cx="1268.6" cy="257.7" r="2.2" fill="#0000e6"/><circle cx="1270.6" cy="226.6" r="2.2" fill="#0000e6"/><circle cx="1272.6" cy="328.8" r="2.2" fill="#0000e6"/><circle cx="1274.6" cy="311.7" r="2.2" fill="#0000e6"/><circle cx="1276.6" cy="302.3" r="2.2" fill="#0000e6"/><circle cx="1278.6" cy="296.8" r="2.2" fill="#0000e6"/><circle cx="1280.6" cy="234.0" r="2.2" fill="#0000e6"/><circle cx="1282.6" cy="285.2" r="2.2" fill="#0000e6"/><circle cx="1284.6" cy="247.7" r="2.2" fill="#0000e6"/><circle cx="1286.6" cy="232.9" r="2.2" fill="#0000e6"/><circle cx="1288.6" cy="243.0" r="2.2" fill="#0000e6"/><circle cx="1290.6" cy="302.5" r="2.2" fill="#0000e6"/><circle cx="1292.6" cy="225.1" r="2.2" fill="#0000e6"/><circle cx="1294.6" cy="245.9" r="2.2" fill="#0000e6"/><circle cx="1296.6" cy="273.2" r="2.2" fill="#0000e6"/><circle cx="1298.6" cy="195.8" r="2.2" fill="#0000e6"/><circle cx="1300.6" cy="242.5" r="2.2" fill="#0000e6"/><circle cx="1302.6" cy="333.9" r="2.2" fill="#0000e6"/><circle cx="1304.6" cy="213.1" r="2.2" fill="#0000e6"/><circle cx="1306.6" cy="251.0" r="2.2" fill="#0000e6"/><circle cx="1308.7" cy="246.2" r="2.2" fill="#0000e6"/><circle cx="1310.7" cy="307.9" r="2.2" fill="#0000e6"/><circle cx="1312.7" cy="334.9" r="2.2" fill="#0000e6"/><circle cx="1314.7" cy="213.6" r="2.2" fill="#0000e6"/><circle cx="1316.7" cy="218.0" r="2.2" fill="#0000e6"/><circle cx="1318.7" cy="272.0" r="2.2" fill="#0000e6"/><circle cx="1320.7" cy="248.5" r="2.2" fill="#0000e6"/><circle cx="1322.7" cy="293.4" r="2.2" fill="#0000e6"/><circle cx="1324.7" cy="258.0" r="2.2" fill="#0000e6"/><circle cx="1326.7" cy="269.9" r="2.2" fill="#0000e6"/><circle cx="1328.7" cy="346.8" r="2.2" fill="#0000e6"/><circle cx="1330.7" cy="271.9" r="2.2" fill="#0000e6"/><circle cx="1332.7" cy="226.2" r="2.2" fill="#0000e6"/><circle cx="1334.7" cy="313.4" r="2.2" fill="#0000e6"/><circle cx="1336.7" cy="229.3" r="2.2" fill="#0000e6"/><circle cx="1338.7" cy="278.4" r="2.2" fill="#0000e6"/><circle cx="1340.7" cy="252.1" r="2.2" fill="#0000e6"/><circle cx="1342.7" cy="250.6" r="2.2" fill="#0000e6"/><circle cx="1344.7" cy="219.2" r="2.2" fill="#0000e6"/><circle cx="1346.7" cy="266.6" r="2.2" fill="#0000e6"/><circle cx="1348.7" cy="271.4" r="2.2" fill="#0000e6"/><circle cx="1350.7" cy="309.2" r="2.2" fill="#0000e6"/><circle cx="1352.7" cy="211.2" r="2.2" fill="#0000e6"/><circle cx="1354.7" cy="292.1" r="2.2" fill="#0000e6"/><circle cx="1356.7" cy="211.7" r="2.2" fill="#0000e6"/><circle cx="1358.8" cy="196.2" r="2.2" fill="#0000e6"/><circle cx="1360.8" cy="254.1" r="2.2" fill="#0000e6"/><circle cx="1362.8" cy="244.9" r="2.2" fill="#0000e6"/><circle cx="1364.8" cy="273.9" r="2.2" fill="#0000e6"/><circle cx="1366.8" cy="276.2" r="2.2" fill="#0000e6"/><circle cx="1368.8" cy="257.4" r="2.2" fill="#0000e6"/><circle cx="1370.8" cy="221.0" r="2.2" fill="#0000e6"/><circle cx="1372.8" cy="247.6" r="2.2" fill="#0000e6"/><circle cx="1374.8" cy="221.9" r="2.2" fill="#0000e6"/><circle cx="1376.8" cy="246.3" r="2.2" fill="#0000e6"/><circle cx="1378.8" cy="253.2" r="2.2" fill="#0000e6"/><circle cx="1380.8" cy="237.8" r="2.2" fill="#0000e6"/><circle cx="1382.8" cy="285.5" r="2.2" fill="#0000e6"/><circle cx="1384.8" cy="384.7" r="2.2" fill="#0000e6"/><circle cx="1386.8" cy="283.2" r="2.2" fill="#0000e6"/><circle cx="1388.8" cy="175.5" r="2.2" fill="#0000e6"/><circle cx="1390.8" cy="265.9" r="2.2" fill="#0000e6"/><circle cx="1392.8" cy="189.5" r="2.2" fill="#0000e6"/><circle cx="1394.8" cy="286.4" r="2.2" fill="#0000e6"/><circle cx="1396.8" cy="340.7" r="2.2" fill="#0000e6"/><circle cx="1398.8" cy="222.8" r="2.2" fill="#0000e6"/><circle cx="1400.8" cy="277.3" r="2.2" fill="#0000e6"/><circle cx="1402.8" cy="310.5" r="2.2" fill="#0000e6"/><circle cx="1404.8" cy="256.9" r="2.2" fill="#0000e6"/><circle cx="1406.8" cy="256.8" r="2.2" fill="#0000e6"/><circle cx="1408.9" cy="295.1" r="2.2" fill="#0000e6"/><circle cx="1410.9" cy="261.0" r="2.2" fill="#0000e6"/><circle cx="1412.9" cy="243.2" r="2.2" fill="#0000e6"/><circle cx="1414.9" cy="317.6" r="2.2" fill="#0000e6"/><circle cx="1416.9" cy="337.0" r="2.2" fill="#0000e6"/><circle cx="1418.9" cy="283.5" r="2.2" fill="#0000e6"/><circle cx="1420.9" cy="199.8" r="2.2" fill="#0000e6"/><circle cx="1422.9" cy="270.5" r="2.2" fill="#0000e6"/><circle cx="1424.9" cy="278.0" r="2.2" fill="#0000e6"/><circle cx="1426.9" cy="248.1" r="2.2" fill="#0000e6"/><circle cx="1428.9" cy="146.8" r="2.2" fill="#0000e6"/><circle cx="1430.9" cy="239.4" r="2.2" fill="#0000e6"/><circle cx="1432.9" cy="333.9" r="2.2" fill="#0000e6"/><circle cx="1434.9" cy="185.2" r="2.2" fill="#0000e6"/><circle cx="1436.9" cy="263.9" r="2.2" fill="#0000e6"/><circle cx="1438.9" cy="365.5" r="2.2" fill="#0000e6"/><circle cx="1440.9" cy="267.4" r="2.2" fill="#0000e6"/><circle cx="1442.9" cy="250.7" r="2.2" fill="#0000e6"/><circle cx="1444.9" cy="258.8" r="2.2" fill="#0000e6"/><circle cx="1446.9" cy="217.0" r="2.2" fill="#0000e6"/><circle cx="1448.9" cy="218.0" r="2.2" fill="#0000e6"/><circle cx="1450.9" cy="192.5" r="2.2" fill="#0000e6"/><circle cx="1452.9" cy="279.7" r="2.2" fill="#0000e6"/><circle cx="1454.9" cy="242.7" r="2.2" fill="#0000e6"/><circle cx="1456.9" cy="270.7" r="2.2" fill="#0000e6"/><circle cx="1459.0" cy="257.6" r="2.2" fill="#0000e6"/><circle cx="1461.0" cy="251.8" r="2.2" fill="#0000e6"/><circle cx="1463.0" cy="245.6" r="2.2" fill="#0000e6"/><circle cx="1465.0" cy="292.5" r="2.2" fill="#0000e6"/><circle cx="1467.0" cy="207.9" r="2.2" fill="#0000e6"/><circle cx="1469.0" cy="221.5" r="2.2" fill="#0000e6"/><circle cx="1471.0" cy="256.7" r="2.2" fill="#0000e6"/><circle cx="1473.0" cy="214.4" r="2.2" fill="#0000e6"/><circle cx="1475.0" cy="224.2" r="2.2" fill="#0000e6"/><circle cx="1477.0" cy="243.9" r="2.2" fill="#0000e6"/><circle cx="1479.0" cy="308.6" r="2.2" fill="#0000e6"/><circle cx="1481.0" cy="235.2" r="2.2" fill="#0000e6"/><circle cx="1483.0" cy="247.5" r="2.2" fill="#0000e6"/><circle cx="1485.0" cy="288.9" r="2.2" fill="#0000e6"/><circle cx="1487.0" cy="252.7" r="2.2" fill="#0000e6"/><circle cx="1489.0" cy="268.3" r="2.2" fill="#0000e6"/><circle cx="1491.0" cy="257.6" r="2.2" fill="#0000e6"/><circle cx="1493.0" cy="198.7" r="2.2" fill="#0000e6"/><circle cx="1495.0" cy="265.0" r="2.2" fill="#0000e6"/><circle cx="1497.0" cy="204.7" r="2.2" fill="#0000e6"/><circle cx="1499.0" cy="175.9" r="2.2" fill="#0000e6"/><circle cx="1501.0" cy="264.1" r="2.2" fill="#0000e6"/><circle cx="1503.0" cy="279.3" r="2.2" fill="#0000e6"/><circle cx="1505.0" cy="249.1" r="2.2" fill="#0000e6"/><circle cx="1507.0" cy="172.0" r="2.2" fill="#0000e6"/><circle cx="1509.1" cy="194.2" r="2.2" fill="#0000e6"/><circle cx="1511.1" cy="298.0" r="2.2" fill="#0000e6"/><circle cx="1513.1" cy="207.1" r="2.2" fill="#0000e6"/><circle cx="1515.1" cy="228.0" r="2.2" fill="#0000e6"/><circle cx="1517.1" cy="316.9" r="2.2" fill="#0000e6"/><circle cx="1519.1" cy="199.1" r="2.2" fill="#0000e6"/><circle cx="1521.1" cy="226.6" r="2.2" fill="#0000e6"/><circle cx="1523.1" cy="313.8" r="2.2" fill="#0000e6"/><circle cx="1525.1" cy="360.0" r="2.2" fill="#0000e6"/><circle cx="1527.1" cy="223.2" r="2.2" fill="#0000e6"/><circle cx="1529.1" cy="224.7" r="2.2" fill="#0000e6"/><circle cx="1531.1" cy="200.6" r="2.2" fill="#0000e6"/><circle cx="1533.1" cy="219.6" r="2.2" fill="#0000e6"/><circle cx="1535.1" cy="302.1" r="2.2" fill="#0000e6"/><circle cx="1537.1" cy="285.9" r="2.2" fill="#0000e6"/><circle cx="1539.1" cy="239.1" r="2.2" fill="#0000e6"/><circle cx="1541.1" cy="274.1" r="2.2" fill="#0000e6"/><circle cx="1543.1" cy="250.9" r="2.2" fill="#0000e6"/><circle cx="1545.1" cy="251.1" r="2.2" fill="#0000e6"/><circle cx="1547.1" cy="267.0" r="2.2" fill="#0000e6"/><circle cx="1549.1" cy="214.7" r="2.2" fill="#0000e6"/><circle cx="1551.1" cy="252.1" r="2.2" fill="#0000e6"/><circle cx="1553.1" cy="224.9" r="2.2" fill="#0000e6"/><circle cx="1555.1" cy="307.3" r="2.2" fill="#0000e6"/><circle cx="1557.1" cy="261.0" r="2.2" fill="#0000e6"/><circle cx="1559.2" cy="287.9" r="2.2" fill="#0000e6"/><circle cx="1561.2" cy="197.2" r="2.2" fill="#0000e6"/><circle cx="1563.2" cy="337.8" r="2.2" fill="#0000e6"/><circle cx="1565.2" cy="240.8" r="2.2" fill="#0000e6"/><circle cx="1567.2" cy="316.9" r="2.2" fill="#0000e6"/><circle cx="1569.2" cy="258.6" r="2.2" fill="#0000e6"/><circle cx="1571.2" cy="355.1" r="2.2" fill="#0000e6"/><circle cx="1573.2" cy="248.5" r="2.2" fill="#0000e6"/><circle cx="1575.2" cy="223.0" r="2.2" fill="#0000e6"/><circle cx="1577.2" cy="177.5" r="2.2" fill="#0000e6"/><circle cx="1579.2" cy="318.5" r="2.2" fill="#0000e6"/><circle cx="1581.2" cy="243.5" r="2.2" fill="#0000e6"/><circle cx="1583.2" cy="271.0" r="2.2" fill="#0000e6"/><circle cx="1585.2" cy="286.6" r="2.2" fill="#0000e6"/><circle cx="1587.2" cy="166.7" r="2.2" fill="#0000e6"/><circle cx="1589.2" cy="226.1" r="2.2" fill="#0000e6"/><circle cx="1591.2" cy="341.8" r="2.2" fill="#0000e6"/><circle cx="1593.2" cy="196.0" r="2.2" fill="#0000e6"/><circle cx="1595.2" cy="329.8" r="2.2" fill="#0000e6"/><circle cx="1597.2" cy="190.1" r="2.2" fill="#0000e6"/><circle cx="1599.2" cy="223.8" r="2.2" fill="#0000e6"/><circle cx="1601.2" cy="264.2" r="2.2" fill="#0000e6"/><circle cx="1603.2" cy="334.0" r="2.2" fill="#0000e6"/><circle cx="1605.2" cy="249.8" r="2.2" fill="#0000e6"/><circle cx="1607.2" cy="263.2" r="2.2" fill="#0000e6"/><circle cx="1609.3" cy="253.3" r="2.2" fill="#0000e6"/><circle cx="1611.3" cy="287.6" r="2.2" fill="#0000e6"/><circle cx="1613.3" cy="299.8" r="2.2" fill="#0000e6"/><circle cx="1615.3" cy="209.2" r="2.2" fill="#0000e6"/><circle cx="1617.3" cy="227.1" r="2.2" fill="#0000e6"/><circle cx="1619.3" cy="319.1" r="2.2" fill="#0000e6"/><circle cx="1621.3" cy="293.0" r="2.2" fill="#0000e6"/><circle cx="1623.3" cy="225.4" r="2.2" fill="#0000e6"/><circle cx="1625.3" cy="209.5" r="2.2" fill="#0000e6"/><circle cx="1627.3" cy="320.2" r="2.2" fill="#0000e6"/><circle cx="1629.3" cy="220.3" r="2.2" fill="#0000e6"/><circle cx="1631.3" cy="194.2" r="2.2" fill="#0000e6"/><circle cx="1633.3" cy="266.9" r="2.2" fill="#0000e6"/><circle cx="1635.3" cy="284.9" r="2.2" fill="#0000e6"/><circle cx="1637.3" cy="330.8" r="2.2" fill="#0000e6"/><circle cx="1639.3" cy="305.1" r="2.2" fill="#0000e6"/><circle cx="1641.3" cy="220.5" r="2.2" fill="#0000e6"/><circle cx="1643.3" cy="329.8" r="2.2" fill="#0000e6"/><circle cx="1645.3" cy="231.4" r="2.2" fill="#0000e6"/><circle cx="1647.3" cy="276.8" r="2.2" fill="#0000e6"/><circle cx="1649.3" cy="206.3" r="2.2" fill="#0000e6"/><circle cx="1651.3" cy="203.7" r="2.2" fill="#0000e6"/><circle cx="1653.3" cy="161.1" r="2.2" fill="#0000e6"/><circle cx="1655.3" cy="244.5" r="2.2" fill="#0000e6"/><circle cx="1657.3" cy="319.9" r="2.2" fill="#0000e6"/><circle cx="1659.4" cy="184.6" r="2.2" fill="#0000e6"/><circle cx="1661.4" cy="281.7" r="2.2" fill="#0000e6"/><circle cx="1663.4" cy="246.4" r="2.2" fill="#0000e6"/><circle cx="1665.4" cy="235.1" r="2.2" fill="#0000e6"/><circle cx="1667.4" cy="183.7" r="2.2" fill="#0000e6"/><circle cx="1669.4" cy="286.0" r="2.2" fill="#0000e6"/><circle cx="1671.4" cy="266.9" r="2.2" fill="#0000e6"/><circle cx="1673.4" cy="219.1" r="2.2" fill="#0000e6"/><circle cx="1675.4" cy="215.0" r="2.2" fill="#0000e6"/><circle cx="1677.4" cy="277.1" r="2.2" fill="#0000e6"/><circle cx="1679.4" cy="237.7" r="2.2" fill="#0000e6"/><circle cx="1681.4" cy="202.6" r="2.2" fill="#0000e6"/><circle cx="1683.4" cy="238.2" r="2.2" fill="#0000e6"/><circle cx="1685.4" cy="153.8" r="2.2" fill="#0000e6"/><circle cx="1687.4" cy="269.8" r="2.2" fill="#0000e6"/><circle cx="1689.4" cy="256.6" r="2.2" fill="#0000e6"/><circle cx="1691.4" cy="269.1" r="2.2" fill="#0000e6"/><circle cx="1693.4" cy="247.5" r="2.2" fill="#0000e6"/><circle cx="1695.4" cy="277.7" r="2.2" fill="#0000e6"/><circle cx="1697.4" cy="293.6" r="2.2" fill="#0000e6"/><circle cx="1699.4" cy="237.6" r="2.2" fill="#0000e6"/><circle cx="1701.4" cy="299.5" r="2.2" fill="#0000e6"/><circle cx="1703.4" cy="286.2" r="2.2" fill="#0000e6"/><circle cx="1705.4" cy="281.0" r="2.2" fill="#0000e6"/><circle cx="1707.4" cy="232.7" r="2.2" fill="#0000e6"/><circle cx="1709.5" cy="303.1" r="2.2" fill="#0000e6"/><circle cx="1711.5" cy="232.2" r="2.2" fill="#0000e6"/><circle cx="1713.5" cy="231.4" r="2.2" fill="#0000e6"/><circle cx="1715.5" cy="265.8" r="2.2" fill="#0000e6"/><circle cx="1717.5" cy="251.7" r="2.2" fill="#0000e6"/><circle cx="1719.5" cy="227.0" r="2.2" fill="#0000e6"/><circle cx="1721.5" cy="308.4" r="2.2" fill="#0000e6"/><circle cx="1723.5" cy="371.0" r="2.2" fill="#0000e6"/><circle cx="1725.5" cy="345.8" r="2.2" fill="#0000e6"/><circle cx="1727.5" cy="285.2" r="2.2" fill="#0000e6"/><circle cx="1729.5" cy="252.2" r="2.2" fill="#0000e6"/><circle cx="1731.5" cy="193.5" r="2.2" fill="#0000e6"/><circle cx="1733.5" cy="234.4" r="2.2" fill="#0000e6"/><circle cx="1735.5" cy="196.6" r="2.2" fill="#0000e6"/><circle cx="1737.5" cy="229.5" r="2.2" fill="#0000e6"/><circle cx="1739.5" cy="258.9" r="2.2" fill="#0000e6"/><circle cx="1741.5" cy="275.2" r="2.2" fill="#0000e6"/><circle cx="1743.5" cy="265.0" r="2.2" fill="#0000e6"/><circle cx="1745.5" cy="331.9" r="2.2" fill="#0000e6"/><circle cx="1747.5" cy="246.6" r="2.2" fill="#0000e6"/><circle cx="1749.5" cy="253.7" r="2.2" fill="#0000e6"/><circle cx="1751.5" cy="145.9" r="2.2" fill="#0000e6"/><circle cx="1753.5" cy="263.8" r="2.2" fill="#0000e6"/><circle cx="1755.5" cy="190.4" r="2.2" fill="#0000e6"/><circle cx="1757.5" cy="282.7" r="2.2" fill="#0000e6"/><circle cx="1759.6" cy="285.0" r="2.2" fill="#0000e6"/><circle cx="1761.6" cy="200.3" r="2.2" fill="#0000e6"/><circle cx="1763.6" cy="239.9" r="2.2" fill="#0000e6"/><circle cx="1765.6" cy="279.1" r="2.2" fill="#0000e6"/><circle cx="1767.6" cy="238.2" r="2.2" fill="#0000e6"/><circle cx="1769.6" cy="293.3" r="2.2" fill="#0000e6"/><circle cx="1771.6" cy="247.8" r="2.2" fill="#0000e6"/><circle cx="1773.6" cy="258.2" r="2.2" fill="#0000e6"/><circle cx="1775.6" cy="306.8" r="2.2" fill="#0000e6"/><circle cx="1777.6" cy="233.4" r="2.2" fill="#0000e6"/><circle cx="1438.9" cy="365.5" r="3" fill="#ff0000"/><circle cx="1438.9" cy="233.5" r="2.6" fill="#ff0000"/><line x1="1098.6" y1="55" x2="1098.6" y2="421" stroke="#000" stroke-width="1.2"/><line x1="1098" y1="420.5" x2="1778" y2="420.5" stroke="#000" stroke-width="1.2"/><line x1="1112.5" y1="420" x2="1112.5" y2="425" stroke="#000" stroke-width="1"/><line x1="1132.5" y1="420" x2="1132.5" y2="425" stroke="#000" stroke-width="1"/><line x1="1152.6" y1="420" x2="1152.6" y2="425" stroke="#000" stroke-width="1"/><line x1="1172.6" y1="420" x2="1172.6" y2="425" stroke="#000" stroke-width="1"/><line x1="1192.7" y1="420" x2="1192.7" y2="425" stroke="#000" stroke-width="1"/><line x1="1212.7" y1="420" x2="1212.7" y2="425" stroke="#000" stroke-width="1"/><line x1="1232.7" y1="420" x2="1232.7" y2="425" stroke="#000" stroke-width="1"/><line x1="1252.8" y1="420" x2="1252.8" y2="425" stroke="#000" stroke-width="1"/><line x1="1272.8" y1="420" x2="1272.8" y2="425" stroke="#000" stroke-width="1"/><line x1="1292.9" y1="420" x2="1292.9" y2="425" stroke="#000" stroke-width="1"/><line x1="1312.9" y1="420" x2="1312.9" y2="425" stroke="#000" stroke-width="1"/><line x1="1332.9" y1="420" x2="1332.9" y2="425" stroke="#000" stroke-width="1"/><line x1="1353.0" y1="420" x2="1353.0" y2="425" stroke="#000" stroke-width="1"/><line x1="1373.0" y1="420" x2="1373.0" y2="425" stroke="#000" stroke-width="1"/><line x1="1393.1" y1="420" x2="1393.1" y2="425" stroke="#000" stroke-width="1"/><line x1="1413.1" y1="420" x2="1413.1" y2="425" stroke="#000" stroke-width="1"/><line x1="1433.1" y1="420" x2="1433.1" y2="425" stroke="#000" stroke-width="1"/><line x1="1453.2" y1="420" x2="1453.2" y2="425" stroke="#000" stroke-width="1"/><line x1="1473.2" y1="420" x2="1473.2" y2="425" stroke="#000" stroke-width="1"/><line x1="1493.3" y1="420" x2="1493.3" y2="425" stroke="#000" stroke-width="1"/><line x1="1513.3" y1="420" x2="1513.3" y2="425" stroke="#000" stroke-width="1"/><line x1="1533.3" y1="420" x2="1533.3" y2="425" stroke="#000" stroke-width="1"/><line x1="1553.4" y1="420" x2="1553.4" y2="425" stroke="#000" stroke-width="1"/><line x1="1573.4" y1="420" x2="1573.4" y2="425" stroke="#000" stroke-width="1"/><line x1="1593.5" y1="420" x2="1593.5" y2="425" stroke="#000" stroke-width="1"/><line x1="1613.5" y1="420" x2="1613.5" y2="425" stroke="#000" stroke-width="1"/><line x1="1633.5" y1="420" x2="1633.5" y2="425" stroke="#000" stroke-width="1"/><line x1="1653.6" y1="420" x2="1653.6" y2="425" stroke="#000" stroke-width="1"/><line x1="1673.6" y1="420" x2="1673.6" y2="425" stroke="#000" stroke-width="1"/><line x1="1693.7" y1="420" x2="1693.7" y2="425" stroke="#000" stroke-width="1"/><line x1="1713.7" y1="420" x2="1713.7" y2="425" stroke="#000" stroke-width="1"/><line x1="1733.7" y1="420" x2="1733.7" y2="425" stroke="#000" stroke-width="1"/><line x1="1753.8" y1="420" x2="1753.8" y2="425" stroke="#000" stroke-width="1"/><line x1="1773.8" y1="420" x2="1773.8" y2="425" stroke="#000" stroke-width="1"/></svg>
<div class="t" style="right:718.4px;top:188.0px;line-height:16px;"><span style="display:inline-block;font-size:12.5px;transform:scaleX(0.9);transform-origin:100% 50%;">2000</span></div>
<div class="t" style="right:718.4px;top:298.4px;line-height:16px;"><span style="display:inline-block;font-size:12.5px;transform:scaleX(0.9);transform-origin:100% 50%;">1000</span></div>
<div class="t" style="right:710.6px;top:409.4px;line-height:16px;"><span style="display:inline-block;font-size:12.5px;transform:scaleX(0.9);transform-origin:100% 50%;">0</span></div>
<div class="t" style="left:1132.3px;top:422.7px;line-height:16px;width:0;display:flex;justify-content:center;"><span style="display:inline-block;font-size:12.5px;transform:scaleX(0.9);transform-origin:50% 50%;">90</span></div>
<div class="t" style="left:1192.4px;top:422.7px;line-height:16px;width:0;display:flex;justify-content:center;"><span style="display:inline-block;font-size:12.5px;transform:scaleX(0.9);transform-origin:50% 50%;">120</span></div>
<div class="t" style="left:1252.5px;top:422.7px;line-height:16px;width:0;display:flex;justify-content:center;"><span style="display:inline-block;font-size:12.5px;transform:scaleX(0.9);transform-origin:50% 50%;">150</span></div>
<div class="t" style="left:1312.7px;top:422.7px;line-height:16px;width:0;display:flex;justify-content:center;"><span style="display:inline-block;font-size:12.5px;transform:scaleX(0.9);transform-origin:50% 50%;">180</span></div>
<div class="t" style="left:1372.8px;top:422.7px;line-height:16px;width:0;display:flex;justify-content:center;"><span style="display:inline-block;font-size:12.5px;transform:scaleX(0.9);transform-origin:50% 50%;">210</span></div>
<div class="t" style="left:1432.9px;top:422.7px;line-height:16px;width:0;display:flex;justify-content:center;"><span style="display:inline-block;font-size:12.5px;transform:scaleX(0.9);transform-origin:50% 50%;">240</span></div>
<div class="t" style="left:1493.0px;top:422.7px;line-height:16px;width:0;display:flex;justify-content:center;"><span style="display:inline-block;font-size:12.5px;transform:scaleX(0.9);transform-origin:50% 50%;">270</span></div>
<div class="t" style="left:1553.1px;top:422.7px;line-height:16px;width:0;display:flex;justify-content:center;"><span style="display:inline-block;font-size:12.5px;transform:scaleX(0.9);transform-origin:50% 50%;">300</span></div>
<div class="t" style="left:1613.3px;top:422.7px;line-height:16px;width:0;display:flex;justify-content:center;"><span style="display:inline-block;font-size:12.5px;transform:scaleX(0.9);transform-origin:50% 50%;">330</span></div>
<div class="t" style="left:1673.4px;top:422.7px;line-height:16px;width:0;display:flex;justify-content:center;"><span style="display:inline-block;font-size:12.5px;transform:scaleX(0.9);transform-origin:50% 50%;">360</span></div>
<div class="t" style="left:1733.5px;top:422.7px;line-height:16px;width:0;display:flex;justify-content:center;"><span style="display:inline-block;font-size:12.5px;transform:scaleX(0.9);transform-origin:50% 50%;">390</span></div>
<div class="t" style="left:1056.5px;top:439.8px;line-height:16px;"><span style="display:inline-block;font-size:12.5px;transform:scaleX(0.92);transform-origin:0 50%;">Exp=246msec / Frm No.243.0 / Frm Mid= 18h45m25.3467s,  End= 25.4697s</span></div>
<div class="a" style="left:1041px;top:465px;width:752px;height:131px;box-shadow:inset 1px 1px #fff,inset -1px -1px #a0a0a0"></div>
<div class="t" style="left:1047.6px;top:468.5px;line-height:16px;"><span style="display:inline-block;font-size:12.5px;transform:scaleX(0.9);transform-origin:0 50%;">Current-</span></div>
<div class="t" style="left:1056px;top:484.3px;line-height:16px;"><span style="display:inline-block;font-size:12.5px;transform:scaleX(0.9);transform-origin:0 50%;">Frame</span></div>
<div class="t" style="left:1108.5px;top:468.5px;line-height:16px;"><span style="display:inline-block;font-size:12.5px;transform:scaleX(0.9);transform-origin:0 50%;">Luminous</span></div>
<div class="t" style="left:1106px;top:484.3px;line-height:16px;"><span style="display:inline-block;font-size:12.5px;transform:scaleX(0.9);transform-origin:0 50%;">Intensity</span></div>
<div class="ed" style="left:1048.2px;top:502.5px;width:47.6px;height:18.1px;padding-left:3px;"><span style="display:inline-block;font-size:12.5px;transform:scaleX(0.9);transform-origin:0 50%;">243.0</span></div>
<div class="ed" style="left:1104.4px;top:502.5px;width:55.4px;height:18.1px;padding-left:3px;"><span style="display:inline-block;font-size:12.5px;transform:scaleX(0.9);transform-origin:0 50%;">494.1</span></div>
<div class="a" style="left:1167.4px;top:472.4px;width:159.2px;height:17.4px;background:#f2f2f2;background-image:repeating-conic-gradient(#e6e6e6 0 25%,#fafafa 0 50%);background-size:2px 2px"></div>
<div class="btn" style="left:1167.4px;top:472.4px;width:16.1px;height:17.4px;"></div>
<div class="a" style="width:0;height:0;border-top:4px solid transparent;border-bottom:4px solid transparent;border-right:4px solid #000;left:1173.5px;top:477px"></div>
<div class="btn" style="left:1183.5px;top:472.4px;width:18.1px;height:17.4px;"></div>
<div class="btn" style="left:1310.2px;top:472.4px;width:16.4px;height:17.4px;"></div>
<div class="a" style="width:0;height:0;border-top:4px solid transparent;border-bottom:4px solid transparent;border-left:4px solid #000;left:1316.5px;top:477px"></div>
<div class="btn" style="left:1168.2px;top:497.4px;width:40.6px;height:24.5px;"><span style="display:inline-block;font-size:12.5px;transform:scaleX(0.86);transform-origin:50% 50%;">-10Sec</span></div>
<div class="btn" style="left:1212.2px;top:497.4px;width:32.5px;height:24.5px;"><span style="display:inline-block;font-size:12.5px;transform:scaleX(0.86);transform-origin:50% 50%;">-1Sec</span></div>
<div class="btn" style="left:1248.1px;top:497.4px;width:34.6px;height:24.5px;"><span style="display:inline-block;font-size:12.5px;transform:scaleX(0.86);transform-origin:50% 50%;">+1Sec</span></div>
<div class="btn" style="left:1286.1px;top:497.4px;width:40.5px;height:24.5px;"><span style="display:inline-block;font-size:12.5px;transform:scaleX(0.86);transform-origin:50% 50%;">+10Sec</span></div>
<div class="t" style="left:1333.5px;top:475.6px;line-height:16px;"><span style="display:inline-block;font-size:12.5px;transform:scaleX(0.92);transform-origin:0 50%;">Scale</span></div>
<div class="ed" style="left:1372px;top:470.5px;width:21.5px;height:18.5px;padding-left:3px;"><span style="display:inline-block;font-size:12.5px;transform:scaleX(0.85);transform-origin:0 50%;">1</span></div>
<div class="sp" style="left:1396px;top:469.5px;width:16.4px;height:23.1px"><i class="up" style="top:0;height:11.6px"></i><i class="dn" style="top:11.6px;height:11.6px"></i></div>
<div class="t" style="left:1336.2px;top:500.4px;line-height:16px;"><span style="display:inline-block;font-size:12.5px;transform:scaleX(0.88);transform-origin:0 50%;">Radius</span></div>
<div class="ed" style="left:1372px;top:502px;width:21.5px;height:19px;padding-left:3px;"><span style="display:inline-block;font-size:12.5px;transform:scaleX(0.85);transform-origin:0 50%;">2</span></div>
<div class="sp" style="left:1396px;top:501px;width:16.4px;height:23.2px"><i class="up" style="top:0;height:11.6px"></i><i class="dn" style="top:11.6px;height:11.6px"></i></div>
<div class="cb" style="left:1048.2px;top:531px;width:12px;height:12px;"><svg width="12" height="12" style="position:absolute;left:0;top:0"><path d="M3 5.5 L5 8 L9.5 3" stroke="#000" stroke-width="1.8" fill="none"/></svg></div>
<div class="t" style="left:1065.4px;top:528.7px;line-height:16px;"><span style="display:inline-block;font-size:12.5px;transform:scaleX(0.9);transform-origin:0 50%;">Show Image of Clicked point</span></div>
<div class="cb" style="left:1048.2px;top:547px;width:12px;height:12px;"></div>
<div class="t" style="left:1065.4px;top:544.5px;line-height:16px;"><span style="display:inline-block;font-size:12.5px;transform:scaleX(0.9);transform-origin:0 50%;">Reproduce Aperture Position</span></div>
<div class="btn" style="left:1222.4px;top:529.5px;width:72.2px;height:24.3px;"><span style="display:inline-block;font-size:12.5px;transform:scaleX(0.9);transform-origin:50% 50%;">Save Image</span></div>
<div class="btn" style="left:1300.5px;top:530.5px;width:117.2px;height:22.5px;"><span style="display:inline-block;font-size:12.5px;transform:scaleX(0.9);transform-origin:50% 50%;">Copy to ClipBoard</span></div>
<div class="btn" style="left:1280.3px;top:561.2px;width:120.5px;height:27.4px;padding:0 2px"><span style="display:inline-block;font-size:14px;font-weight:bold;color:#0a0a30;margin-left:-4px">Lunar Identification</span></div>
<div class="grp" style="left:1419.1px;top:471.2px;width:48.3px;height:81.0px;"></div>
<div class="t" style="left:1443px;top:463.7px;line-height:16px;width:0;display:flex;justify-content:center;"><span style="display:inline-block;font-size:12.5px;transform:scaleX(0.9);transform-origin:50% 50%;background:#f0f0f0;padding:0 1px">Y Axis</span></div>
<div class="t" style="left:1443px;top:475.6px;line-height:16px;width:0;display:flex;justify-content:center;"><span style="display:inline-block;font-size:12.5px;transform:scaleX(0.9);transform-origin:50% 50%;">Min Max</span></div>
<div class="btn" style="left:1423.6px;top:490.4px;width:16.4px;height:15.6px;"></div>
<div class="a" style="width:0;height:0;border-left:4px solid transparent;border-right:4px solid transparent;border-bottom:4px solid #000;left:1427.8px;top:496.0px"></div>
<div class="btn" style="left:1423.6px;top:508.3px;width:16.4px;height:18.0px;"></div>
<div class="btn" style="left:1423.6px;top:529.7px;width:16.4px;height:16.9px;"></div>
<div class="a" style="width:0;height:0;border-left:4px solid transparent;border-right:4px solid transparent;border-top:4px solid #000;left:1427.8px;top:536.0px"></div>
<div class="btn" style="left:1445px;top:490.4px;width:18px;height:15.6px;"></div>
<div class="a" style="width:0;height:0;border-left:4px solid transparent;border-right:4px solid transparent;border-bottom:4px solid #000;left:1450.0px;top:496.0px"></div>
<div class="btn" style="left:1445px;top:508.3px;width:18px;height:18.0px;"></div>
<div class="btn" style="left:1445px;top:529.7px;width:18px;height:16.9px;"></div>
<div class="a" style="width:0;height:0;border-left:4px solid transparent;border-right:4px solid transparent;border-top:4px solid #000;left:1450.0px;top:536.0px"></div>
<div class="grp" style="left:1470.8px;top:471.2px;width:59.6px;height:52.9px;"><div class="gl" style="left:4px;font-size:12.5px;transform:scaleX(0.9);transform-origin:0 50%">Line</div></div>
<div class="cb" style="left:1478.7px;top:479.5px;width:12px;height:12px;"><svg width="12" height="12" style="position:absolute;left:0;top:0"><path d="M3 5.5 L5 8 L9.5 3" stroke="#000" stroke-width="1.8" fill="none"/></svg></div>
<div class="t" style="left:1496px;top:477.5px;line-height:16px;"><span style="display:inline-block;font-size:12.5px;transform:scaleX(0.9);transform-origin:0 50%;">Axis</span></div>
<div class="cb" style="left:1478.7px;top:494px;width:12px;height:12px;"><svg width="12" height="12" style="position:absolute;left:0;top:0"><path d="M3 5.5 L5 8 L9.5 3" stroke="#000" stroke-width="1.8" fill="none"/></svg></div>
<div class="t" style="left:1496px;top:492.0px;line-height:16px;"><span style="display:inline-block;font-size:12.5px;transform:scaleX(0.9);transform-origin:0 50%;">Data</span></div>
<div class="btn" style="left:1478.2px;top:506px;width:45.9px;height:14.7px;"><span style="display:inline-block;font-size:12.5px;transform:scaleX(0.9);transform-origin:50% 50%;">Hilight</span></div>
<div class="btn" style="left:1470.8px;top:529.7px;width:64.1px;height:27.0px;"><span style="display:inline-block;font-size:12.5px;transform:scaleX(0.9);transform-origin:50% 50%;">[3D] Image</span></div>
<div class="grp" style="left:1534.4px;top:471.2px;width:55.6px;height:53.5px;"><div class="gl" style="left:4px;font-size:12.5px;transform:scaleX(0.9);transform-origin:0 50%">Width</div></div>
<div class="rb on" style="left:1542.4px;top:483.2px"></div>
<div class="t" style="left:1560px;top:481.2px;line-height:16px;"><span style="display:inline-block;font-size:12.5px;transform:scaleX(0.9);transform-origin:0 50%;outline:1px dotted #000">Part</span></div>
<div class="rb" style="left:1542.4px;top:504.6px"></div>
<div class="t" style="left:1560px;top:502.6px;line-height:16px;"><span style="display:inline-block;font-size:12.5px;transform:scaleX(0.9);transform-origin:0 50%;">Entire</span></div>
<div class="btn" style="left:1596px;top:469px;width:142.4px;height:17.5px;"><span style="display:inline-block;font-size:12.5px;transform:scaleX(0.9);transform-origin:50% 50%;">Correction for absorption</span></div>
<div class="btn" style="left:1596px;top:489.7px;width:102.6px;height:17.1px;"><span style="display:inline-block;font-size:12.5px;transform:scaleX(0.9);transform-origin:50% 50%;">Noise Reduction</span></div>
<div class="btn" style="left:1702.4px;top:489.7px;width:36.0px;height:17.1px;"><span style="display:inline-block;font-size:12.5px;transform:scaleX(0.9);transform-origin:50% 50%;">Reset</span></div>
<div class="btn" style="left:1752.5px;top:469.4px;width:35.3px;height:24.3px;"><span style="display:inline-block;font-size:12.5px;transform:scaleX(0.9);transform-origin:50% 50%;">close</span></div>
<div class="cb" style="left:1595.1px;top:509.9px;width:12px;height:12px;"><svg width="12" height="12" style="position:absolute;left:0;top:0"><path d="M3 5.5 L5 8 L9.5 3" stroke="#000" stroke-width="1.8" fill="none"/></svg></div>
<div class="t" style="left:1612.5px;top:507.8px;line-height:16px;"><span style="display:inline-block;font-size:12.5px;transform:scaleX(0.9);transform-origin:0 50%;">Information</span></div>
<div class="grp" style="left:1694.5px;top:520.3px;width:94.0px;height:35.2px;"><div class="gl" style="left:6px;font-size:12.5px;transform:scaleX(0.9);transform-origin:0 50%">Object</div></div>
<div class="cb" style="left:1744.4px;top:507px;width:12px;height:12px;"><svg width="12" height="12" style="position:absolute;left:0;top:0"><path d="M3 5.5 L5 8 L9.5 3" stroke="#000" stroke-width="1.8" fill="none"/></svg></div>
<div class="t" style="left:1760.8px;top:505.0px;line-height:16px;"><span style="display:inline-block;font-size:12.5px;transform:scaleX(0.9);transform-origin:0 50%;">ID</span></div>
<div class="btn prs" style="left:1700.1px;top:531.5px;width:18.7px;height:16.6px;"><span style="display:inline-block;font-size:12.5px;transform:scaleX(0.9);transform-origin:50% 50%;">A</span></div>
<div class="btn prs" style="left:1722px;top:531.5px;width:18.6px;height:16.6px;"><span style="display:inline-block;font-size:12.5px;transform:scaleX(0.9);transform-origin:50% 50%;">B</span></div>
<div class="btn" style="left:1744px;top:531.5px;width:19.1px;height:16.6px;"><span style="display:inline-block;font-size:12.5px;transform:scaleX(0.9);transform-origin:50% 50%;">C</span></div>
<div class="btn" style="left:1766.5px;top:531.5px;width:16.1px;height:16.6px;"><span style="display:inline-block;font-size:12.5px;transform:scaleX(0.9);transform-origin:50% 50%;">L</span></div>
<div class="btn" style="left:1410.1px;top:561.2px;width:168.6px;height:27.4px;"><span style="display:inline-block;font-size:14.5px;transform:scaleX(0.95);transform-origin:50% 50%;font-weight:bold;">Diffraction Analysis</span></div>
<div class="btn" style="left:1584.4px;top:561.2px;width:104.5px;height:27.4px;"><span style="display:inline-block;font-size:14.5px;transform:scaleX(0.95);transform-origin:50% 50%;font-weight:bold;color:#0a0a40;">Make Report</span></div>
<div class="grp" style="left:1048.5px;top:622.7px;width:734.5px;height:89.4px;"><div class="gl" style="left:6px;font-size:12.5px;transform:scaleX(0.9);transform-origin:0 50%">S/N vs Error</div></div>
<div class="t" style="left:1057px;top:632.9px;line-height:16px;"><span style="display:inline-block;font-size:13.5px;transform:scaleX(0.95);transform-origin:0 50%;font-weight:bold;">S/N (Full drop)</span></div>
<div class="ed" style="left:1160.9px;top:631.1px;width:54.2px;height:25.5px;padding-left:4px;"><span style="display:inline-block;font-size:15px;transform:scaleX(0.95);transform-origin:0 50%;font-weight:bold;color:#0000ff;">3.8</span></div>
<div class="t" style="left:1241px;top:632.9px;line-height:16px;"><span style="display:inline-block;font-size:13.5px;transform:scaleX(0.9);transform-origin:0 50%;font-weight:bold;">S/N</span></div>
<div class="ed" style="left:1272.4px;top:630.3px;width:46.6px;height:24.6px;padding-left:3px;"><span style="display:inline-block;font-size:14px;transform:scaleX(0.9);transform-origin:0 50%;font-weight:bold;color:#ff0000;">3.2</span></div>
<div class="t" style="left:1328.4px;top:632.9px;line-height:16px;"><span style="display:inline-block;font-size:13.5px;transform:scaleX(0.93);transform-origin:0 50%;font-weight:bold;">expected on</span></div>
<div class="ed" style="left:1416.6px;top:630.3px;width:46.6px;height:24.6px;padding-left:3px;"><span style="display:inline-block;font-size:14px;transform:scaleX(0.9);transform-origin:0 50%;font-weight:bold;">2.1</span></div>
<div class="t" style="left:1471.7px;top:632.9px;line-height:16px;"><span style="display:inline-block;font-size:13.5px;transform:scaleX(0.93);transform-origin:0 50%;font-weight:bold;">Mag drop</span></div>
<div class="t" style="left:1568px;top:632.9px;line-height:16px;"><span style="display:inline-block;font-size:13.5px;transform:scaleX(0.93);transform-origin:0 50%;font-weight:bold;">Frame exposure</span></div>
<div class="ed" style="left:1688px;top:630.3px;width:47.5px;height:24.6px;padding-left:3px;"><span style="display:inline-block;font-size:14px;transform:scaleX(0.9);transform-origin:0 50%;font-weight:bold;">246</span></div>
<div class="t" style="left:1744px;top:632.9px;line-height:16px;"><span style="display:inline-block;font-size:13.5px;transform:scaleX(0.93);transform-origin:0 50%;font-weight:bold;">msec</span></div>
<div class="t" style="left:1056.1px;top:664.7px;line-height:16px;"><span style="display:inline-block;font-size:13.5px;transform:scaleX(0.93);transform-origin:0 50%;font-weight:bold;">Fresnel</span></div>
<div class="t" style="left:1056.1px;top:680.4px;line-height:16px;"><span style="display:inline-block;font-size:13.5px;transform:scaleX(0.93);transform-origin:0 50%;font-weight:bold;">Number</span></div>
<div class="ed" style="left:1112.1px;top:670.6px;width:47.5px;height:24.1px;padding-left:3px;"><span style="display:inline-block;font-size:14px;transform:scaleX(0.9);transform-origin:0 50%;font-weight:bold;">1365</span></div>
<div class="t" style="left:1213.8px;top:664.7px;line-height:16px;width:0;display:flex;justify-content:center;"><span style="display:inline-block;font-size:13.5px;transform:scaleX(0.93);transform-origin:50% 50%;font-weight:bold;">Lower Limit</span></div>
<div class="t" style="left:1213.8px;top:680.4px;line-height:16px;width:0;display:flex;justify-content:center;"><span style="display:inline-block;font-size:13.5px;transform:scaleX(0.93);transform-origin:50% 50%;font-weight:bold;">for detect</span></div>
<div class="ed" style="left:1256.3px;top:670.6px;width:55.1px;height:24.1px;padding-left:3px;"><span style="display:inline-block;font-size:14px;transform:scaleX(0.9);transform-origin:0 50%;font-weight:bold;color:#0000ff;">1129</span></div>
<div class="t" style="left:1312.3px;top:672.3px;line-height:16px;"><span style="display:inline-block;font-size:13.5px;transform:scaleX(0.93);transform-origin:0 50%;font-weight:bold;">msec</span></div>
<div class="t" style="left:1360.2px;top:664.7px;line-height:16px;"><span style="display:inline-block;font-size:13.5px;transform:scaleX(0.93);transform-origin:0 50%;font-weight:bold;">Predicted</span></div>
<div class="t" style="left:1360.2px;top:680.2px;line-height:16px;"><span style="display:inline-block;font-size:12px;transform:scaleX(0.93);transform-origin:0 50%;font-weight:bold;">Time Error</span></div>
<div class="ed" style="left:1432.3px;top:670.6px;width:63.6px;height:24.1px;padding-left:3px;"><span style="display:inline-block;font-size:14px;transform:scaleX(0.9);transform-origin:0 50%;font-weight:bold;color:#ff0000;">172</span></div>
<div class="t" style="left:1496.7px;top:680.4px;line-height:16px;"><span style="display:inline-block;font-size:13.5px;transform:scaleX(0.93);transform-origin:0 50%;font-weight:bold;">msec</span></div>
<div class="t" style="left:1543.8px;top:664.7px;line-height:16px;"><span style="display:inline-block;font-size:13.5px;transform:scaleX(0.93);transform-origin:0 50%;font-weight:bold;">Expected Error for</span></div>
<div class="t" style="left:1543.8px;top:680.4px;line-height:16px;"><span style="display:inline-block;font-size:13.5px;transform:scaleX(0.93);transform-origin:0 50%;font-weight:bold;">Analyzing event time</span></div>
<div class="ed" style="left:1688px;top:670.6px;width:47.5px;height:24.1px;padding-left:3px;"><span style="display:inline-block;font-size:14px;transform:scaleX(0.9);transform-origin:0 50%;font-weight:bold;">108</span></div>
<div class="t" style="left:1740.6px;top:680.4px;line-height:16px;"><span style="display:inline-block;font-size:13.5px;transform:scaleX(0.93);transform-origin:0 50%;font-weight:bold;">msec</span></div></body></html>
